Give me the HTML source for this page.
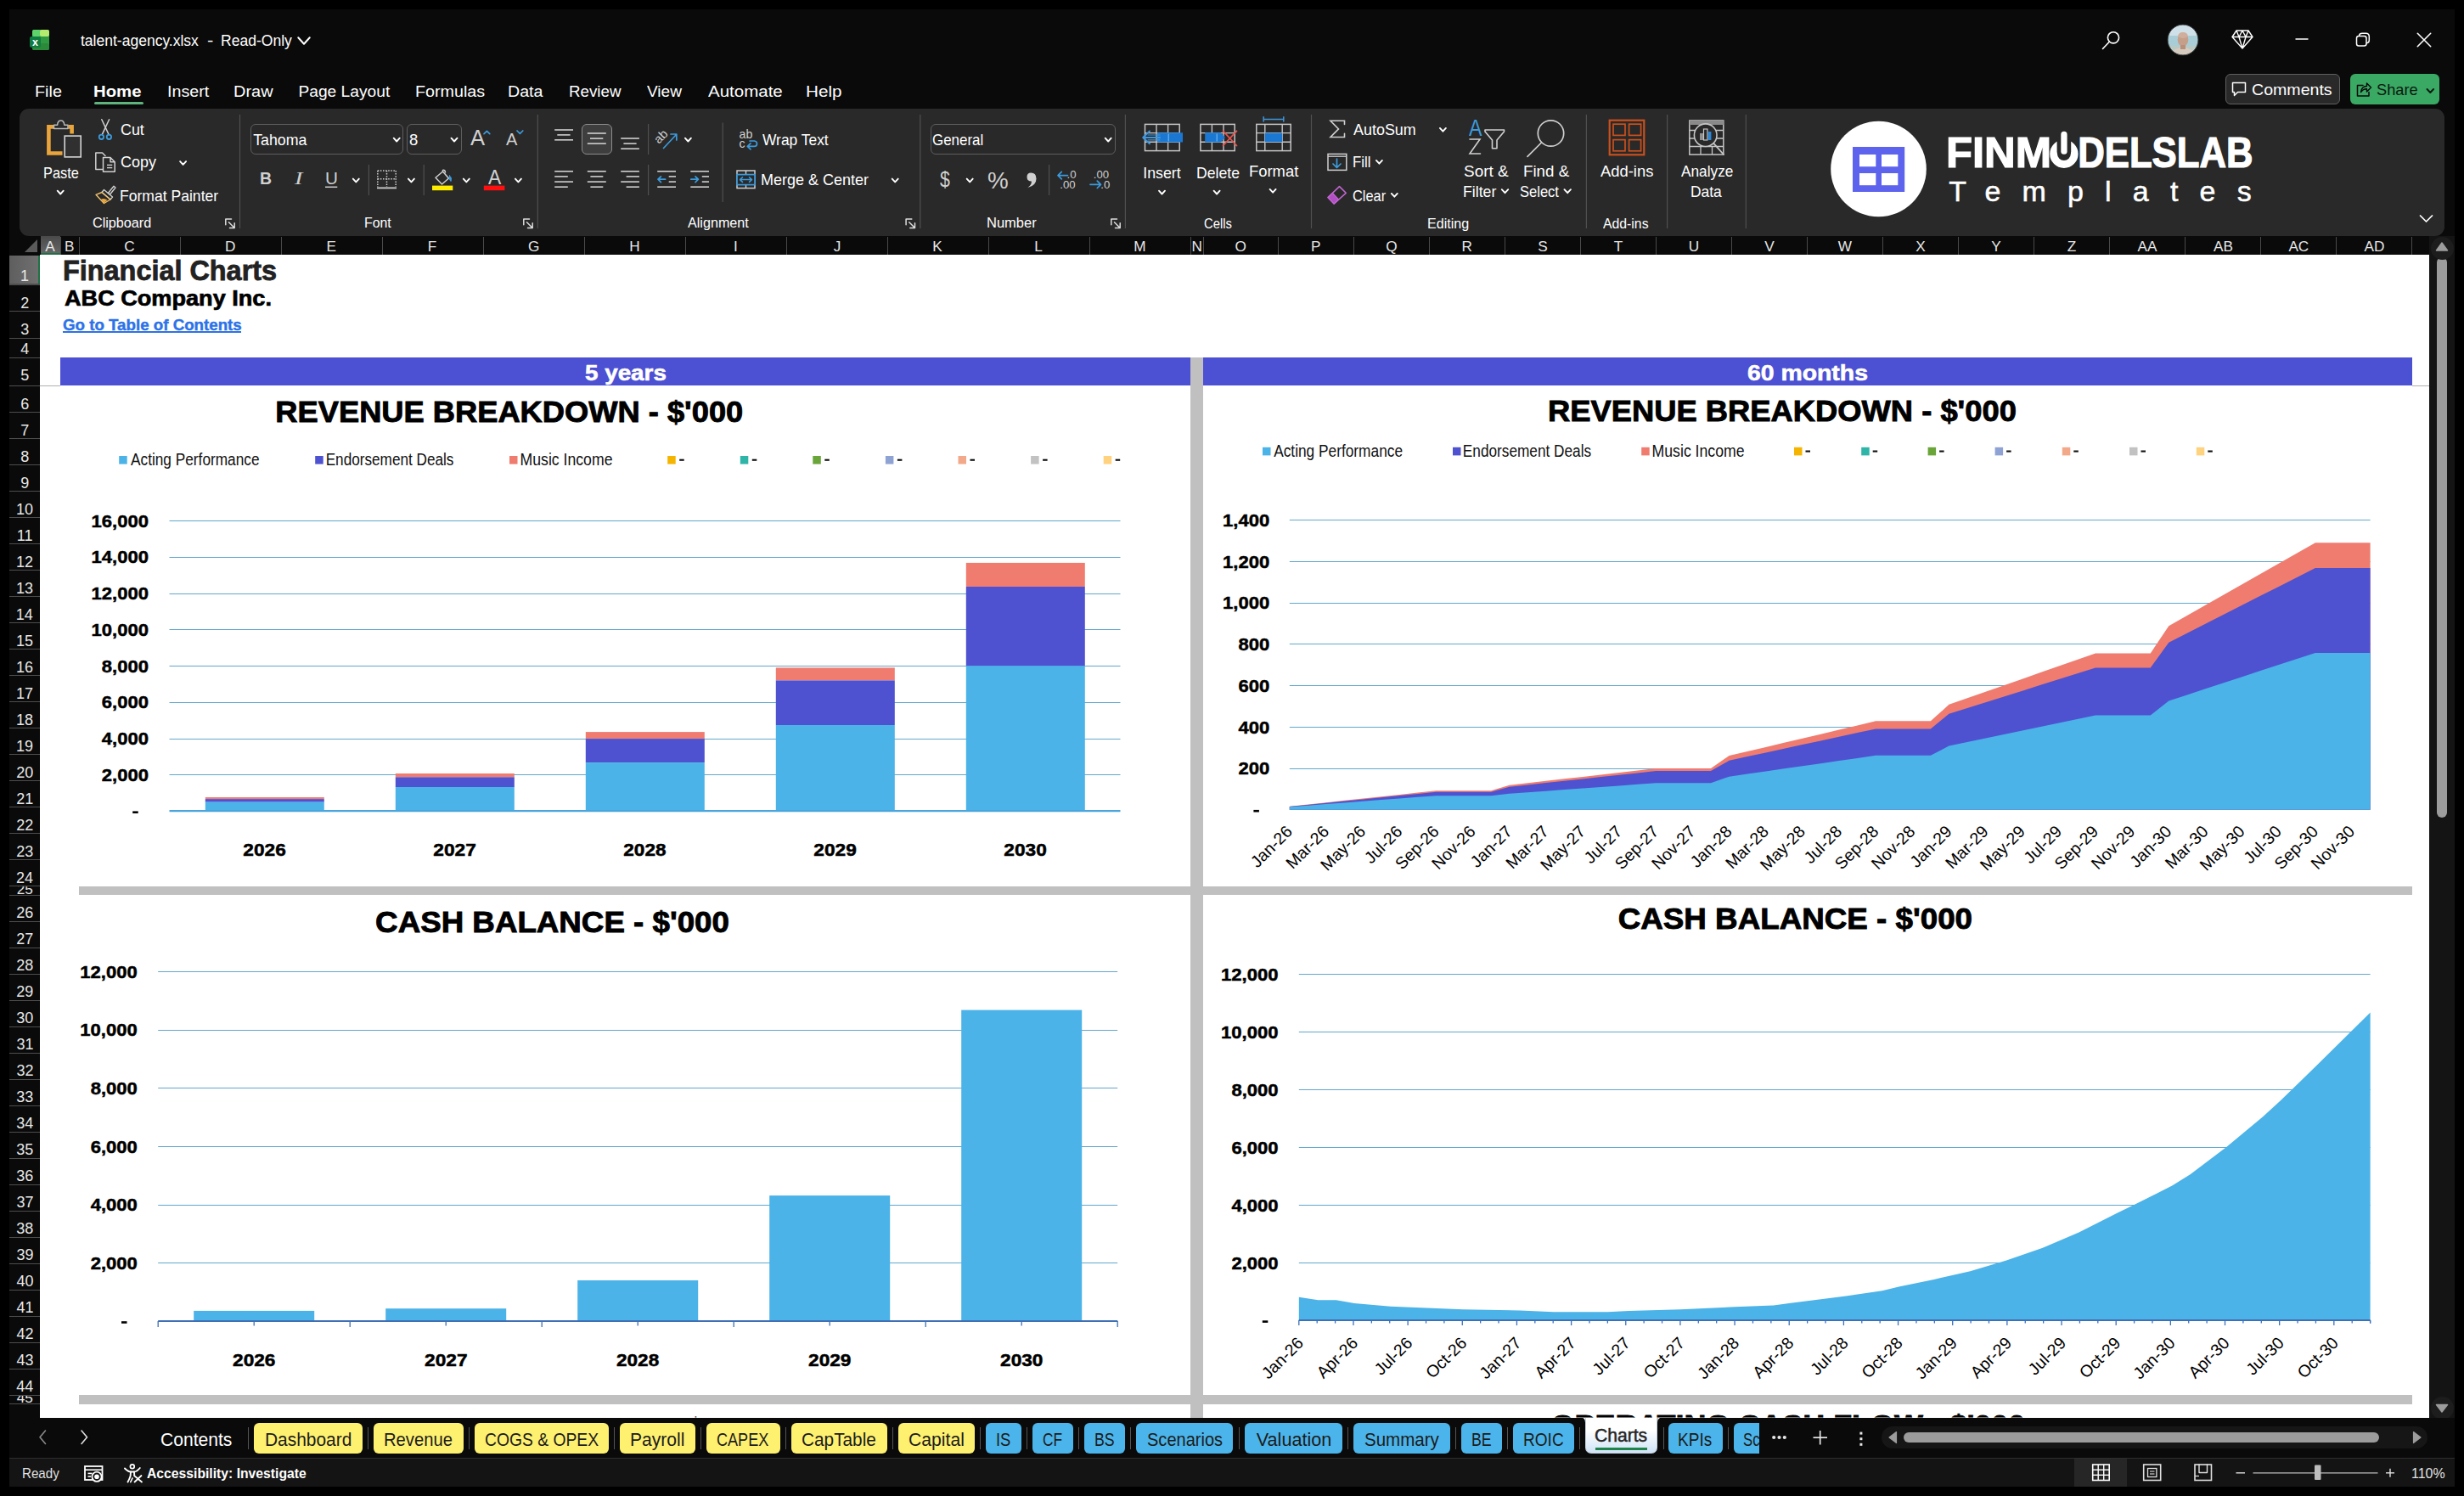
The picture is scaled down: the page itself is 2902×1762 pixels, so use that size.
<!DOCTYPE html>
<html><head><meta charset="utf-8"><title>talent-agency.xlsx - Excel</title>
<style>
html,body{margin:0;padding:0;background:#000;}
body{width:2902px;height:1762px;position:relative;overflow:hidden;font-family:"Liberation Sans",sans-serif;}
.t{position:absolute;white-space:nowrap;transform-origin:0 0;display:block;}
.b{position:absolute;box-sizing:border-box;}
svg.ov{position:absolute;left:0;top:0;}
svg text{font-family:"Liberation Sans",sans-serif;}
</style></head>
<body>
<div class="b " style="left:11.00px;top:11.00px;width:2880.00px;height:1740.00px;background:#0a0a0a;"></div>
<div class="b " style="left:23.00px;top:127.50px;width:2856.00px;height:150.00px;background:#292929;border-radius:11px;"></div>
<span class="t" style="left:95.24px;top:37px;font-size:18.90px;line-height:21px;color:#fff;transform:scaleX(0.9270);">talent-agency.xlsx</span>
<span class="t" style="left:244.12px;top:37px;font-size:18.90px;line-height:21px;color:#fff;transform:scaleX(1.1640);">-</span>
<span class="t" style="left:260.10px;top:37px;font-size:18.90px;line-height:21px;color:#fff;transform:scaleX(0.9287);">Read-Only</span>
<span class="t" style="left:40.92px;top:97px;font-size:19.20px;line-height:21px;color:#fff;transform:scaleX(1.0312);">File</span>
<span class="t" style="left:110.18px;top:97px;font-size:19.20px;line-height:21px;color:#fff;font-weight:bold;transform:scaleX(1.0592);">Home</span>
<span class="t" style="left:196.73px;top:97px;font-size:19.20px;line-height:21px;color:#fff;transform:scaleX(1.0265);">Insert</span>
<span class="t" style="left:275.40px;top:97px;font-size:19.20px;line-height:21px;color:#fff;transform:scaleX(1.0394);">Draw</span>
<span class="t" style="left:351.47px;top:97px;font-size:19.20px;line-height:21px;color:#fff;">Page Layout</span>
<span class="t" style="left:489.42px;top:97px;font-size:19.20px;line-height:21px;color:#fff;transform:scaleX(1.0275);">Formulas</span>
<span class="t" style="left:598.43px;top:97px;font-size:19.20px;line-height:21px;color:#fff;transform:scaleX(1.0238);">Data</span>
<span class="t" style="left:669.50px;top:97px;font-size:19.20px;line-height:21px;color:#fff;transform:scaleX(0.9766);">Review</span>
<span class="t" style="left:762.00px;top:97px;font-size:19.20px;line-height:21px;color:#fff;transform:scaleX(0.9932);">View</span>
<span class="t" style="left:834.00px;top:97px;font-size:19.20px;line-height:21px;color:#fff;transform:scaleX(1.0687);">Automate</span>
<span class="t" style="left:949.35px;top:97px;font-size:19.20px;line-height:21px;color:#fff;transform:scaleX(1.0767);">Help</span>
<div class="b " style="left:111.00px;top:120.00px;width:58.00px;height:3.00px;background:#5fb37c;border-radius:1.5px;"></div>
<div class="b " style="left:2621.00px;top:87.00px;width:135.00px;height:36.00px;background:#292929;border:1px solid #606060;border-radius:6px;"></div>
<span class="t" style="left:2652.02px;top:95px;font-size:19.00px;line-height:21px;color:#fff;transform:scaleX(1.0305);">Comments</span>
<div class="b " style="left:2768.00px;top:87.00px;width:105.00px;height:36.00px;background:#3aa963;border-radius:6px;"></div>
<span class="t" style="left:2799.18px;top:95px;font-size:19.00px;line-height:21px;color:#0a1a10;transform:scaleX(0.9588);">Share</span>
<div class="b " style="left:47.00px;top:277.50px;width:2813.00px;height:22.50px;background:#0a0a0a;"></div>
<div class="b " style="left:47.50px;top:277.50px;width:23.00px;height:22.50px;background:#555;background:linear-gradient(#4a4a4a,#666);border-bottom:2px solid #1e7145;"></div>
<div class="b " style="left:70.50px;top:279.00px;width:1.00px;height:21.00px;background:#4a4a4a;"></div>
<span class="t" style="left:53.28px;top:280px;font-size:17.20px;line-height:20px;color:#e6e6e6;">A</span>
<div class="b " style="left:92.50px;top:279.00px;width:1.00px;height:21.00px;background:#4a4a4a;"></div>
<span class="t" style="left:76.02px;top:280px;font-size:17.20px;line-height:20px;color:#e6e6e6;">B</span>
<div class="b " style="left:211.50px;top:279.00px;width:1.00px;height:21.00px;background:#4a4a4a;"></div>
<span class="t" style="left:146.18px;top:280px;font-size:17.20px;line-height:20px;color:#e6e6e6;">C</span>
<div class="b " style="left:330.50px;top:279.00px;width:1.00px;height:21.00px;background:#4a4a4a;"></div>
<span class="t" style="left:265.01px;top:280px;font-size:17.20px;line-height:20px;color:#e6e6e6;">D</span>
<div class="b " style="left:449.50px;top:279.00px;width:1.00px;height:21.00px;background:#4a4a4a;"></div>
<span class="t" style="left:384.44px;top:280px;font-size:17.20px;line-height:20px;color:#e6e6e6;">E</span>
<div class="b " style="left:568.50px;top:279.00px;width:1.00px;height:21.00px;background:#4a4a4a;"></div>
<span class="t" style="left:503.87px;top:280px;font-size:17.20px;line-height:20px;color:#e6e6e6;">F</span>
<div class="b " style="left:687.50px;top:279.00px;width:1.00px;height:21.00px;background:#4a4a4a;"></div>
<span class="t" style="left:622.01px;top:280px;font-size:17.20px;line-height:20px;color:#e6e6e6;">G</span>
<div class="b " style="left:806.50px;top:279.00px;width:1.00px;height:21.00px;background:#4a4a4a;"></div>
<span class="t" style="left:741.26px;top:280px;font-size:17.20px;line-height:20px;color:#e6e6e6;">H</span>
<div class="b " style="left:925.50px;top:279.00px;width:1.00px;height:21.00px;background:#4a4a4a;"></div>
<span class="t" style="left:864.09px;top:280px;font-size:17.20px;line-height:20px;color:#e6e6e6;">I</span>
<div class="b " style="left:1044.50px;top:279.00px;width:1.00px;height:21.00px;background:#4a4a4a;"></div>
<span class="t" style="left:981.67px;top:280px;font-size:17.20px;line-height:20px;color:#e6e6e6;">J</span>
<div class="b " style="left:1163.50px;top:279.00px;width:1.00px;height:21.00px;background:#4a4a4a;"></div>
<span class="t" style="left:1098.14px;top:280px;font-size:17.20px;line-height:20px;color:#e6e6e6;">K</span>
<div class="b " style="left:1282.50px;top:279.00px;width:1.00px;height:21.00px;background:#4a4a4a;"></div>
<span class="t" style="left:1218.30px;top:280px;font-size:17.20px;line-height:20px;color:#e6e6e6;">L</span>
<div class="b " style="left:1401.50px;top:279.00px;width:1.00px;height:21.00px;background:#4a4a4a;"></div>
<span class="t" style="left:1335.32px;top:280px;font-size:17.20px;line-height:20px;color:#e6e6e6;">M</span>
<div class="b " style="left:1416.50px;top:279.00px;width:1.00px;height:21.00px;background:#4a4a4a;"></div>
<span class="t" style="left:1403.42px;top:280px;font-size:17.20px;line-height:20px;color:#e6e6e6;">N</span>
<div class="b " style="left:1505.00px;top:279.00px;width:1.00px;height:21.00px;background:#4a4a4a;"></div>
<span class="t" style="left:1454.59px;top:280px;font-size:17.20px;line-height:20px;color:#e6e6e6;">O</span>
<div class="b " style="left:1594.00px;top:279.00px;width:1.00px;height:21.00px;background:#4a4a4a;"></div>
<span class="t" style="left:1544.02px;top:280px;font-size:17.20px;line-height:20px;color:#e6e6e6;">P</span>
<div class="b " style="left:1683.00px;top:279.00px;width:1.00px;height:21.00px;background:#4a4a4a;"></div>
<span class="t" style="left:1632.34px;top:280px;font-size:17.20px;line-height:20px;color:#e6e6e6;">Q</span>
<div class="b " style="left:1772.00px;top:279.00px;width:1.00px;height:21.00px;background:#4a4a4a;"></div>
<span class="t" style="left:1721.46px;top:280px;font-size:17.20px;line-height:20px;color:#e6e6e6;">R</span>
<div class="b " style="left:1861.00px;top:279.00px;width:1.00px;height:21.00px;background:#4a4a4a;"></div>
<span class="t" style="left:1811.24px;top:280px;font-size:17.20px;line-height:20px;color:#e6e6e6;">S</span>
<div class="b " style="left:1950.00px;top:279.00px;width:1.00px;height:21.00px;background:#4a4a4a;"></div>
<span class="t" style="left:1900.75px;top:280px;font-size:17.20px;line-height:20px;color:#e6e6e6;">T</span>
<div class="b " style="left:2039.00px;top:279.00px;width:1.00px;height:21.00px;background:#4a4a4a;"></div>
<span class="t" style="left:1988.81px;top:280px;font-size:17.20px;line-height:20px;color:#e6e6e6;">U</span>
<div class="b " style="left:2128.00px;top:279.00px;width:1.00px;height:21.00px;background:#4a4a4a;"></div>
<span class="t" style="left:2078.28px;top:280px;font-size:17.20px;line-height:20px;color:#e6e6e6;">V</span>
<div class="b " style="left:2217.00px;top:279.00px;width:1.00px;height:21.00px;background:#4a4a4a;"></div>
<span class="t" style="left:2164.87px;top:280px;font-size:17.20px;line-height:20px;color:#e6e6e6;">W</span>
<div class="b " style="left:2306.00px;top:279.00px;width:1.00px;height:21.00px;background:#4a4a4a;"></div>
<span class="t" style="left:2256.24px;top:280px;font-size:17.20px;line-height:20px;color:#e6e6e6;">X</span>
<div class="b " style="left:2395.00px;top:279.00px;width:1.00px;height:21.00px;background:#4a4a4a;"></div>
<span class="t" style="left:2345.28px;top:280px;font-size:17.20px;line-height:20px;color:#e6e6e6;">Y</span>
<div class="b " style="left:2484.00px;top:279.00px;width:1.00px;height:21.00px;background:#4a4a4a;"></div>
<span class="t" style="left:2434.75px;top:280px;font-size:17.20px;line-height:20px;color:#e6e6e6;">Z</span>
<div class="b " style="left:2573.00px;top:279.00px;width:1.00px;height:21.00px;background:#4a4a4a;"></div>
<span class="t" style="left:2517.56px;top:280px;font-size:17.20px;line-height:20px;color:#e6e6e6;">AA</span>
<div class="b " style="left:2662.00px;top:279.00px;width:1.00px;height:21.00px;background:#4a4a4a;"></div>
<span class="t" style="left:2606.99px;top:280px;font-size:17.20px;line-height:20px;color:#e6e6e6;">AB</span>
<div class="b " style="left:2751.00px;top:279.00px;width:1.00px;height:21.00px;background:#4a4a4a;"></div>
<span class="t" style="left:2695.39px;top:280px;font-size:17.20px;line-height:20px;color:#e6e6e6;">AC</span>
<div class="b " style="left:2840.00px;top:279.00px;width:1.00px;height:21.00px;background:#4a4a4a;"></div>
<span class="t" style="left:2784.48px;top:280px;font-size:17.20px;line-height:20px;color:#e6e6e6;">AD</span>
<div class="b " style="left:47.00px;top:300.00px;width:2813.50px;height:1369.60px;background:#fff;"></div>
<div class="b " style="left:11.00px;top:300.00px;width:36.00px;height:1369.60px;background:#0a0a0a;overflow:hidden;"></div>
<div class="b " style="left:11.00px;top:300.50px;width:36.00px;height:34.00px;background:#666;border-right:2px solid #1e7145;background:linear-gradient(90deg,#5e5e5e,#707070);"></div>
<div class="b " style="left:11.00px;top:334.20px;width:36.00px;height:1.40px;background:#4d4d4d;"></div>
<div class="b " style="left:11.00px;top:366.10px;width:36.00px;height:1.40px;background:#4d4d4d;"></div>
<div class="b " style="left:11.00px;top:397.70px;width:36.00px;height:1.40px;background:#4d4d4d;"></div>
<div class="b " style="left:11.00px;top:420.70px;width:36.00px;height:1.40px;background:#4d4d4d;"></div>
<div class="b " style="left:11.00px;top:453.90px;width:36.00px;height:1.40px;background:#4d4d4d;"></div>
<div class="b " style="left:11.00px;top:484.90px;width:36.00px;height:1.40px;background:#4d4d4d;"></div>
<div class="b " style="left:11.00px;top:515.90px;width:36.00px;height:1.40px;background:#4d4d4d;"></div>
<div class="b " style="left:11.00px;top:546.90px;width:36.00px;height:1.40px;background:#4d4d4d;"></div>
<div class="b " style="left:11.00px;top:577.90px;width:36.00px;height:1.40px;background:#4d4d4d;"></div>
<div class="b " style="left:11.00px;top:608.90px;width:36.00px;height:1.40px;background:#4d4d4d;"></div>
<div class="b " style="left:11.00px;top:639.90px;width:36.00px;height:1.40px;background:#4d4d4d;"></div>
<div class="b " style="left:11.00px;top:670.90px;width:36.00px;height:1.40px;background:#4d4d4d;"></div>
<div class="b " style="left:11.00px;top:701.90px;width:36.00px;height:1.40px;background:#4d4d4d;"></div>
<div class="b " style="left:11.00px;top:732.90px;width:36.00px;height:1.40px;background:#4d4d4d;"></div>
<div class="b " style="left:11.00px;top:763.90px;width:36.00px;height:1.40px;background:#4d4d4d;"></div>
<div class="b " style="left:11.00px;top:794.90px;width:36.00px;height:1.40px;background:#4d4d4d;"></div>
<div class="b " style="left:11.00px;top:825.90px;width:36.00px;height:1.40px;background:#4d4d4d;"></div>
<div class="b " style="left:11.00px;top:856.90px;width:36.00px;height:1.40px;background:#4d4d4d;"></div>
<div class="b " style="left:11.00px;top:887.90px;width:36.00px;height:1.40px;background:#4d4d4d;"></div>
<div class="b " style="left:11.00px;top:918.90px;width:36.00px;height:1.40px;background:#4d4d4d;"></div>
<div class="b " style="left:11.00px;top:949.90px;width:36.00px;height:1.40px;background:#4d4d4d;"></div>
<div class="b " style="left:11.00px;top:980.90px;width:36.00px;height:1.40px;background:#4d4d4d;"></div>
<div class="b " style="left:11.00px;top:1011.90px;width:36.00px;height:1.40px;background:#4d4d4d;"></div>
<div class="b " style="left:11.00px;top:1042.90px;width:36.00px;height:1.40px;background:#4d4d4d;"></div>
<div class="b " style="left:11.00px;top:1053.50px;width:36.00px;height:1.40px;background:#4d4d4d;"></div>
<div class="b " style="left:11.00px;top:1084.50px;width:36.00px;height:1.40px;background:#4d4d4d;"></div>
<div class="b " style="left:11.00px;top:1115.50px;width:36.00px;height:1.40px;background:#4d4d4d;"></div>
<div class="b " style="left:11.00px;top:1146.50px;width:36.00px;height:1.40px;background:#4d4d4d;"></div>
<div class="b " style="left:11.00px;top:1177.50px;width:36.00px;height:1.40px;background:#4d4d4d;"></div>
<div class="b " style="left:11.00px;top:1208.50px;width:36.00px;height:1.40px;background:#4d4d4d;"></div>
<div class="b " style="left:11.00px;top:1239.50px;width:36.00px;height:1.40px;background:#4d4d4d;"></div>
<div class="b " style="left:11.00px;top:1270.50px;width:36.00px;height:1.40px;background:#4d4d4d;"></div>
<div class="b " style="left:11.00px;top:1301.50px;width:36.00px;height:1.40px;background:#4d4d4d;"></div>
<div class="b " style="left:11.00px;top:1332.50px;width:36.00px;height:1.40px;background:#4d4d4d;"></div>
<div class="b " style="left:11.00px;top:1363.50px;width:36.00px;height:1.40px;background:#4d4d4d;"></div>
<div class="b " style="left:11.00px;top:1394.50px;width:36.00px;height:1.40px;background:#4d4d4d;"></div>
<div class="b " style="left:11.00px;top:1425.50px;width:36.00px;height:1.40px;background:#4d4d4d;"></div>
<div class="b " style="left:11.00px;top:1456.50px;width:36.00px;height:1.40px;background:#4d4d4d;"></div>
<div class="b " style="left:11.00px;top:1487.50px;width:36.00px;height:1.40px;background:#4d4d4d;"></div>
<div class="b " style="left:11.00px;top:1518.50px;width:36.00px;height:1.40px;background:#4d4d4d;"></div>
<div class="b " style="left:11.00px;top:1549.50px;width:36.00px;height:1.40px;background:#4d4d4d;"></div>
<div class="b " style="left:11.00px;top:1580.50px;width:36.00px;height:1.40px;background:#4d4d4d;"></div>
<div class="b " style="left:11.00px;top:1611.50px;width:36.00px;height:1.40px;background:#4d4d4d;"></div>
<div class="b " style="left:11.00px;top:1642.50px;width:36.00px;height:1.40px;background:#4d4d4d;"></div>
<div class="b " style="left:11.00px;top:1653.10px;width:36.00px;height:1.40px;background:#4d4d4d;"></div>
<span class="t" style="left:24.04px;top:315px;font-size:18.00px;line-height:20px;color:#e6e6e6;">1</span>
<span class="t" style="left:24.26px;top:347px;font-size:18.00px;line-height:20px;color:#e6e6e6;">2</span>
<span class="t" style="left:24.35px;top:378px;font-size:18.00px;line-height:20px;color:#e6e6e6;">3</span>
<span class="t" style="left:24.35px;top:401px;font-size:18.00px;line-height:20px;color:#e6e6e6;">4</span>
<span class="t" style="left:24.31px;top:432px;font-size:18.00px;line-height:20px;color:#e6e6e6;">5</span>
<span class="t" style="left:24.22px;top:466px;font-size:18.00px;line-height:20px;color:#e6e6e6;">6</span>
<span class="t" style="left:24.26px;top:497px;font-size:18.00px;line-height:20px;color:#e6e6e6;">7</span>
<span class="t" style="left:24.31px;top:528px;font-size:18.00px;line-height:20px;color:#e6e6e6;">8</span>
<span class="t" style="left:24.31px;top:559px;font-size:18.00px;line-height:20px;color:#e6e6e6;">9</span>
<span class="t" style="left:18.95px;top:590px;font-size:18.00px;line-height:20px;color:#e6e6e6;">10</span>
<span class="t" style="left:19.71px;top:621px;font-size:18.00px;line-height:20px;color:#e6e6e6;">11</span>
<span class="t" style="left:19.04px;top:652px;font-size:18.00px;line-height:20px;color:#e6e6e6;">12</span>
<span class="t" style="left:18.99px;top:683px;font-size:18.00px;line-height:20px;color:#e6e6e6;">13</span>
<span class="t" style="left:18.86px;top:714px;font-size:18.00px;line-height:20px;color:#e6e6e6;">14</span>
<span class="t" style="left:18.99px;top:745px;font-size:18.00px;line-height:20px;color:#e6e6e6;">15</span>
<span class="t" style="left:18.99px;top:776px;font-size:18.00px;line-height:20px;color:#e6e6e6;">16</span>
<span class="t" style="left:19.04px;top:807px;font-size:18.00px;line-height:20px;color:#e6e6e6;">17</span>
<span class="t" style="left:18.99px;top:838px;font-size:18.00px;line-height:20px;color:#e6e6e6;">18</span>
<span class="t" style="left:19.04px;top:869px;font-size:18.00px;line-height:20px;color:#e6e6e6;">19</span>
<span class="t" style="left:19.18px;top:900px;font-size:18.00px;line-height:20px;color:#e6e6e6;">20</span>
<span class="t" style="left:19.27px;top:931px;font-size:18.00px;line-height:20px;color:#e6e6e6;">21</span>
<span class="t" style="left:19.27px;top:962px;font-size:18.00px;line-height:20px;color:#e6e6e6;">22</span>
<span class="t" style="left:19.22px;top:993px;font-size:18.00px;line-height:20px;color:#e6e6e6;">23</span>
<span class="t" style="left:19.09px;top:1024px;font-size:18.00px;line-height:20px;color:#e6e6e6;">24</span>
<span class="t" style="left:19.22px;top:1065px;font-size:18.00px;line-height:20px;color:#e6e6e6;">26</span>
<span class="t" style="left:19.27px;top:1096px;font-size:18.00px;line-height:20px;color:#e6e6e6;">27</span>
<span class="t" style="left:19.22px;top:1127px;font-size:18.00px;line-height:20px;color:#e6e6e6;">28</span>
<span class="t" style="left:19.27px;top:1158px;font-size:18.00px;line-height:20px;color:#e6e6e6;">29</span>
<span class="t" style="left:19.31px;top:1189px;font-size:18.00px;line-height:20px;color:#e6e6e6;">30</span>
<span class="t" style="left:19.40px;top:1220px;font-size:18.00px;line-height:20px;color:#e6e6e6;">31</span>
<span class="t" style="left:19.40px;top:1251px;font-size:18.00px;line-height:20px;color:#e6e6e6;">32</span>
<span class="t" style="left:19.36px;top:1282px;font-size:18.00px;line-height:20px;color:#e6e6e6;">33</span>
<span class="t" style="left:19.22px;top:1313px;font-size:18.00px;line-height:20px;color:#e6e6e6;">34</span>
<span class="t" style="left:19.36px;top:1344px;font-size:18.00px;line-height:20px;color:#e6e6e6;">35</span>
<span class="t" style="left:19.36px;top:1375px;font-size:18.00px;line-height:20px;color:#e6e6e6;">36</span>
<span class="t" style="left:19.40px;top:1406px;font-size:18.00px;line-height:20px;color:#e6e6e6;">37</span>
<span class="t" style="left:19.36px;top:1437px;font-size:18.00px;line-height:20px;color:#e6e6e6;">38</span>
<span class="t" style="left:19.40px;top:1468px;font-size:18.00px;line-height:20px;color:#e6e6e6;">39</span>
<span class="t" style="left:19.45px;top:1499px;font-size:18.00px;line-height:20px;color:#e6e6e6;">40</span>
<span class="t" style="left:19.54px;top:1530px;font-size:18.00px;line-height:20px;color:#e6e6e6;">41</span>
<span class="t" style="left:19.54px;top:1561px;font-size:18.00px;line-height:20px;color:#e6e6e6;">42</span>
<span class="t" style="left:19.49px;top:1592px;font-size:18.00px;line-height:20px;color:#e6e6e6;">43</span>
<span class="t" style="left:19.36px;top:1623px;font-size:18.00px;line-height:20px;color:#e6e6e6;">44</span>
<span class="t" style="left:74.39px;top:300px;font-size:32.60px;line-height:37px;color:#222;font-weight:bold;transform:scaleX(0.9945);-webkit-text-stroke:0.8px #222;">Financial Charts</span>
<span class="t" style="left:75.82px;top:337px;font-size:25.60px;line-height:28px;color:#000;font-weight:bold;transform:scaleX(1.0588);-webkit-text-stroke:0.7px #000;">ABC Company Inc.</span>
<span class="t" style="left:74.05px;top:373px;font-size:17.80px;line-height:20px;color:#2d72e8;font-weight:bold;transform:scaleX(1.0527);-webkit-text-stroke:0.4px #2d72e8;">Go to Table of Contents</span>
<div class="b " style="left:74.40px;top:390.10px;width:210.00px;height:1.80px;background:#2d72e8;"></div>
<div class="b " style="left:70.50px;top:421.20px;width:1331.80px;height:33.20px;background:#4c50d2;"></div>
<div class="b " style="left:1416.50px;top:421.20px;width:1424.50px;height:33.20px;background:#4c50d2;"></div>
<div class="b " style="left:47.00px;top:454.00px;width:23.50px;height:1.00px;background:#b0b0b0;"></div>
<div class="b " style="left:2841.00px;top:454.00px;width:19.50px;height:1.00px;background:#b0b0b0;"></div>
<span class="t" style="left:689.17px;top:424px;font-size:26.20px;line-height:30px;color:#fff;font-weight:bold;transform:scaleX(1.0615);-webkit-text-stroke:0.6px #fff;">5 years</span>
<span class="t" style="left:2057.51px;top:424px;font-size:26.20px;line-height:30px;color:#fff;font-weight:bold;transform:scaleX(1.0839);-webkit-text-stroke:0.6px #fff;">60 months</span>
<div class="b " style="left:1402.20px;top:421.20px;width:14.60px;height:1248.40px;background:#c0c0c0;"></div>
<div class="b " style="left:93.00px;top:1043.60px;width:2748.00px;height:10.80px;background:#c0c0c0;"></div>
<div class="b " style="left:93.00px;top:1643.40px;width:2748.00px;height:11.00px;background:#c0c0c0;"></div>
<div class="b " style="left:2860.50px;top:277.50px;width:30.50px;height:1392.00px;background:#141414;"></div>
<div class="b " style="left:2869.70px;top:303.00px;width:12.20px;height:660.00px;background:#9c9c9c;border-radius:6px;"></div>
<div class="b " style="left:2862.50px;top:279.00px;width:27.00px;height:27.00px;background:#1d1d1d;border-radius:13.5px;"></div>
<div class="b " style="left:2862.50px;top:1645.00px;width:27.00px;height:27.00px;background:#1d1d1d;border-radius:13.5px;"></div>
<div class="b " style="left:11.00px;top:1669.60px;width:2880.00px;height:48.00px;background:#0a0a0a;"></div>
<div class="b " style="left:11.00px;top:1717.40px;width:2880.00px;height:1.00px;background:#2e2e2e;"></div>
<div class="b " style="left:11.00px;top:1718.00px;width:2880.00px;height:33.00px;background:#141414;"></div>
<span class="t" style="left:188.95px;top:1683px;font-size:21.60px;line-height:25px;color:#fff;transform:scaleX(0.9767);">Contents</span>
<div class="b " style="left:292.00px;top:1681.00px;width:1.00px;height:26.00px;background:#555;"></div>
<div class="b " style="left:299.00px;top:1676.00px;width:128.00px;height:35.70px;background:#fff170;border-radius:6px;"></div>
<span class="t" style="left:311.63px;top:1683px;font-size:21.60px;line-height:25px;color:#1c1c1c;transform:scaleX(0.9688);">Dashboard</span>
<div class="b " style="left:433.20px;top:1681.00px;width:1.00px;height:26.00px;background:#555;"></div>
<div class="b " style="left:440.30px;top:1676.00px;width:105.70px;height:35.70px;background:#fff170;border-radius:6px;"></div>
<span class="t" style="left:452.33px;top:1683px;font-size:21.60px;line-height:25px;color:#1c1c1c;transform:scaleX(0.9355);">Revenue</span>
<div class="b " style="left:552.20px;top:1681.00px;width:1.00px;height:26.00px;background:#555;"></div>
<div class="b " style="left:559.30px;top:1676.00px;width:157.40px;height:35.70px;background:#fff170;border-radius:6px;"></div>
<span class="t" style="left:570.63px;top:1683px;font-size:21.60px;line-height:25px;color:#1c1c1c;transform:scaleX(0.8936);">COGS &amp; OPEX</span>
<div class="b " style="left:722.90px;top:1681.00px;width:1.00px;height:26.00px;background:#555;"></div>
<div class="b " style="left:730.00px;top:1676.00px;width:89.00px;height:35.70px;background:#fff170;border-radius:6px;"></div>
<span class="t" style="left:742.06px;top:1683px;font-size:21.60px;line-height:25px;color:#1c1c1c;transform:scaleX(0.9767);">Payroll</span>
<div class="b " style="left:825.20px;top:1681.00px;width:1.00px;height:26.00px;background:#555;"></div>
<div class="b " style="left:832.00px;top:1676.00px;width:86.70px;height:35.70px;background:#fff170;border-radius:6px;"></div>
<span class="t" style="left:844.40px;top:1683px;font-size:21.60px;line-height:25px;color:#1c1c1c;transform:scaleX(0.8368);">CAPEX</span>
<div class="b " style="left:924.90px;top:1681.00px;width:1.00px;height:26.00px;background:#555;"></div>
<div class="b " style="left:932.00px;top:1676.00px;width:112.80px;height:35.70px;background:#fff170;border-radius:6px;"></div>
<span class="t" style="left:944.36px;top:1683px;font-size:21.60px;line-height:25px;color:#1c1c1c;transform:scaleX(0.9629);">CapTable</span>
<div class="b " style="left:1051.00px;top:1681.00px;width:1.00px;height:26.00px;background:#555;"></div>
<div class="b " style="left:1058.00px;top:1676.00px;width:90.00px;height:35.70px;background:#fff170;border-radius:6px;"></div>
<span class="t" style="left:1070.19px;top:1683px;font-size:21.60px;line-height:25px;color:#1c1c1c;transform:scaleX(0.9799);">Capital</span>
<div class="b " style="left:1154.20px;top:1681.00px;width:1.00px;height:26.00px;background:#555;"></div>
<div class="b " style="left:1161.00px;top:1676.00px;width:41.60px;height:35.70px;background:#4bb4ea;border-radius:6px;"></div>
<span class="t" style="left:1172.64px;top:1683px;font-size:21.60px;line-height:25px;color:#1c1c1c;transform:scaleX(0.8521);">IS</span>
<div class="b " style="left:1208.80px;top:1681.00px;width:1.00px;height:26.00px;background:#555;"></div>
<div class="b " style="left:1216.20px;top:1676.00px;width:47.40px;height:35.70px;background:#4bb4ea;border-radius:6px;"></div>
<span class="t" style="left:1228.29px;top:1683px;font-size:21.60px;line-height:25px;color:#1c1c1c;transform:scaleX(0.7995);">CF</span>
<div class="b " style="left:1269.80px;top:1681.00px;width:1.00px;height:26.00px;background:#555;"></div>
<div class="b " style="left:1277.20px;top:1676.00px;width:47.50px;height:35.70px;background:#4bb4ea;border-radius:6px;"></div>
<span class="t" style="left:1288.78px;top:1683px;font-size:21.60px;line-height:25px;color:#1c1c1c;transform:scaleX(0.8226);">BS</span>
<div class="b " style="left:1330.90px;top:1681.00px;width:1.00px;height:26.00px;background:#555;"></div>
<div class="b " style="left:1338.10px;top:1676.00px;width:114.40px;height:35.70px;background:#4bb4ea;border-radius:6px;"></div>
<span class="t" style="left:1350.65px;top:1683px;font-size:21.60px;line-height:25px;color:#1c1c1c;transform:scaleX(0.9280);">Scenarios</span>
<div class="b " style="left:1458.70px;top:1681.00px;width:1.00px;height:26.00px;background:#555;"></div>
<div class="b " style="left:1465.90px;top:1676.00px;width:115.30px;height:35.70px;background:#4bb4ea;border-radius:6px;"></div>
<span class="t" style="left:1479.80px;top:1683px;font-size:21.60px;line-height:25px;color:#1c1c1c;">Valuation</span>
<div class="b " style="left:1587.40px;top:1681.00px;width:1.00px;height:26.00px;background:#555;"></div>
<div class="b " style="left:1593.80px;top:1676.00px;width:114.40px;height:35.70px;background:#4bb4ea;border-radius:6px;"></div>
<span class="t" style="left:1606.58px;top:1683px;font-size:21.60px;line-height:25px;color:#1c1c1c;transform:scaleX(0.9511);">Summary</span>
<div class="b " style="left:1714.40px;top:1681.00px;width:1.00px;height:26.00px;background:#555;"></div>
<div class="b " style="left:1721.20px;top:1676.00px;width:47.80px;height:35.70px;background:#4bb4ea;border-radius:6px;"></div>
<span class="t" style="left:1732.93px;top:1683px;font-size:21.60px;line-height:25px;color:#1c1c1c;transform:scaleX(0.8226);">BE</span>
<div class="b " style="left:1775.20px;top:1681.00px;width:1.00px;height:26.00px;background:#555;"></div>
<div class="b " style="left:1782.00px;top:1676.00px;width:72.20px;height:35.70px;background:#4bb4ea;border-radius:6px;"></div>
<span class="t" style="left:1793.82px;top:1683px;font-size:21.60px;line-height:25px;color:#1c1c1c;transform:scaleX(0.8832);">ROIC</span>
<div class="b " style="left:1860.40px;top:1681.00px;width:1.00px;height:26.00px;background:#555;"></div>
<div class="b " style="left:1867.00px;top:1670.00px;width:85.30px;height:42.00px;background:#fff;border-radius:0 0 7px 7px;background:linear-gradient(#ffffff 35%,#cfe3f7);border:1px solid #c8d4e0;border-top:none;"></div>
<span class="t" style="left:1877.95px;top:1678px;font-size:21.60px;line-height:25px;color:#262626;transform:scaleX(0.9761);-webkit-text-stroke:0.5px #262626;">Charts</span>
<div class="b " style="left:1879.00px;top:1705.00px;width:61.00px;height:3.00px;background:#1e8449;"></div>
<div class="b " style="left:1958.60px;top:1681.00px;width:1.00px;height:26.00px;background:#555;"></div>
<div class="b " style="left:1965.00px;top:1676.00px;width:63.80px;height:35.70px;background:#4bb4ea;border-radius:6px;"></div>
<span class="t" style="left:1976.38px;top:1683px;font-size:21.60px;line-height:25px;color:#1c1c1c;transform:scaleX(0.8818);">KPIs</span>
<div class="b " style="left:2035.20px;top:1681.00px;width:1.00px;height:26.00px;background:#555;"></div>
<div class="b " style="left:2042.30px;top:1676.00px;width:30.00px;height:35.70px;background:#4bb4ea;border-radius:6px 0 0 6px;overflow:hidden;"></div>
<span class="t" style="left:2053.25px;top:1683px;font-size:21.60px;line-height:25px;color:#1c1c1c;transform:scaleX(0.7737);clip-path:inset(0 0 0 0);">Sc</span>
<div class="b " style="left:2072.30px;top:1672.00px;width:12.00px;height:44.00px;background:#0a0a0a;"></div>
<div class="b " style="left:2216.00px;top:1680.00px;width:643.00px;height:26.00px;background:#161616;border-radius:13px;"></div>
<div class="b " style="left:2242.00px;top:1687.00px;width:560.00px;height:12.00px;background:#9c9c9c;border-radius:6px;"></div>
<span class="t" style="left:25.99px;top:1727px;font-size:15.90px;line-height:17px;color:#e0e0e0;transform:scaleX(0.9535);">Ready</span>
<span class="t" style="left:172.91px;top:1727px;font-size:15.90px;line-height:17px;color:#fff;font-weight:bold;transform:scaleX(0.9887);">Accessibility: Investigate</span>
<span class="t" style="left:2839.50px;top:1727px;font-size:15.90px;line-height:17px;color:#e0e0e0;transform:scaleX(1.0063);">110%</span>
<div class="b " style="left:2443.00px;top:1718.00px;width:62.00px;height:33.00px;background:#262626;"></div>
<span class="t" style="left:50.89px;top:194px;font-size:17.80px;line-height:20px;color:#fff;transform:scaleX(0.9183);">Paste</span>
<span class="t" style="left:141.61px;top:143px;font-size:17.80px;line-height:20px;color:#fff;transform:scaleX(1.0041);">Cut</span>
<span class="t" style="left:141.60px;top:181px;font-size:17.80px;line-height:20px;color:#fff;transform:scaleX(1.0105);">Copy</span>
<span class="t" style="left:141.09px;top:221px;font-size:17.80px;line-height:20px;color:#fff;transform:scaleX(0.9875);">Format Painter</span>
<span class="t" style="left:108.69px;top:252px;font-size:17.20px;line-height:20px;color:#fff;transform:scaleX(0.9411);">Clipboard</span>
<div class="b " style="left:295.20px;top:146.40px;width:180.20px;height:35.20px;border:1px solid #5e5e5e;border-radius:6px;"></div>
<div class="b " style="left:479.30px;top:146.40px;width:64.30px;height:35.20px;border:1px solid #5e5e5e;border-radius:6px;"></div>
<span class="t" style="left:298.14px;top:155px;font-size:17.80px;line-height:20px;color:#fff;">Tahoma</span>
<span class="t" style="left:481.76px;top:155px;font-size:17.80px;line-height:20px;color:#fff;transform:scaleX(1.0408);">8</span>
<span class="t" style="left:554.20px;top:147px;font-size:26.60px;line-height:30px;color:#d0d0d0;transform:scaleX(0.9610);">A</span>
<span class="t" style="left:596.00px;top:153px;font-size:20.00px;line-height:22px;color:#d0d0d0;">A</span>
<span class="t" style="left:306.23px;top:198px;font-size:20.60px;line-height:23px;color:#d0d0d0;font-weight:bold;transform:scaleX(0.9472);">B</span>
<span class="t" style="left:382.75px;top:198px;font-size:20.60px;line-height:23px;color:#d0d0d0;transform:scaleX(1.0049);">U</span>
<span class="t" style="left:574.60px;top:195px;font-size:24.00px;line-height:27px;color:#d0d0d0;transform:scaleX(0.9524);">A</span>
<span class="t" style="left:429.33px;top:252px;font-size:17.20px;line-height:20px;color:#fff;transform:scaleX(0.9236);">Font</span>
<div class="b " style="left:685.00px;top:146.00px;width:36.00px;height:36.00px;background:#3e3e3e;border:1px solid #8c8c8c;border-radius:6px;"></div>
<span class="t" style="left:897.50px;top:155px;font-size:17.80px;line-height:20px;color:#fff;transform:scaleX(0.9787);">Wrap Text</span>
<span class="t" style="left:896.06px;top:202px;font-size:17.80px;line-height:20px;color:#fff;transform:scaleX(1.0123);">Merge &amp; Center</span>
<span class="t" style="left:810.40px;top:252px;font-size:17.20px;line-height:20px;color:#fff;transform:scaleX(0.9391);">Alignment</span>
<div class="b " style="left:1096.40px;top:146.40px;width:217.40px;height:35.20px;border:1px solid #5e5e5e;border-radius:6px;"></div>
<span class="t" style="left:1098.45px;top:155px;font-size:17.80px;line-height:20px;color:#fff;transform:scaleX(0.9524);">General</span>
<span class="t" style="left:1107.39px;top:197px;font-size:25.50px;line-height:28px;color:#d0d0d0;transform:scaleX(0.8356);">$</span>
<span class="t" style="left:1162.53px;top:196px;font-size:28.50px;line-height:32px;color:#d0d0d0;transform:scaleX(0.9756);">%</span>
<span class="t" style="left:1162.18px;top:252px;font-size:17.20px;line-height:20px;color:#fff;transform:scaleX(0.9598);">Number</span>
<span class="t" style="left:1346.20px;top:194px;font-size:17.80px;line-height:20px;color:#fff;">Insert</span>
<span class="t" style="left:1408.59px;top:194px;font-size:17.80px;line-height:20px;color:#fff;transform:scaleX(0.9918);">Delete</span>
<span class="t" style="left:1470.93px;top:192px;font-size:17.80px;line-height:20px;color:#fff;transform:scaleX(1.0344);">Format</span>
<span class="t" style="left:1417.66px;top:253px;font-size:17.20px;line-height:20px;color:#fff;transform:scaleX(0.8612);">Cells</span>
<span class="t" style="left:1593.60px;top:143px;font-size:17.80px;line-height:20px;color:#fff;transform:scaleX(1.0085);">AutoSum</span>
<span class="t" style="left:1592.55px;top:181px;font-size:17.80px;line-height:20px;color:#fff;transform:scaleX(0.9454);">Fill</span>
<span class="t" style="left:1593.08px;top:221px;font-size:17.80px;line-height:20px;color:#fff;transform:scaleX(0.9206);">Clear</span>
<span class="t" style="left:1729.60px;top:136px;font-size:26.80px;line-height:30px;color:#3c9bdc;transform:scaleX(0.8641);">A</span>
<span class="t" style="left:1724.35px;top:192px;font-size:17.80px;line-height:20px;color:#fff;transform:scaleX(1.0658);">Sort &amp;</span>
<span class="t" style="left:1723.48px;top:216px;font-size:17.80px;line-height:20px;color:#fff;transform:scaleX(0.9944);">Filter</span>
<span class="t" style="left:1793.80px;top:192px;font-size:17.80px;line-height:20px;color:#fff;transform:scaleX(1.0534);">Find &amp;</span>
<span class="t" style="left:1789.75px;top:216px;font-size:17.80px;line-height:20px;color:#fff;transform:scaleX(0.9302);">Select</span>
<span class="t" style="left:1681.31px;top:253px;font-size:17.20px;line-height:20px;color:#fff;transform:scaleX(0.9354);">Editing</span>
<span class="t" style="left:1885.40px;top:192px;font-size:17.80px;line-height:20px;color:#fff;transform:scaleX(1.0348);">Add-ins</span>
<span class="t" style="left:1888.30px;top:253px;font-size:17.20px;line-height:20px;color:#fff;transform:scaleX(0.9184);">Add-ins</span>
<span class="t" style="left:1980.30px;top:192px;font-size:17.80px;line-height:20px;color:#fff;transform:scaleX(0.9702);">Analyze</span>
<span class="t" style="left:1991.30px;top:216px;font-size:17.80px;line-height:20px;color:#fff;transform:scaleX(0.9800);">Data</span>
<svg class="ov" width="2902" height="1762" viewBox="0 0 2902 1762">
<path d="M351.25 44.25 L358.00 51.75 L364.75 44.25" fill="none" stroke="#fff" stroke-width="2.00" stroke-linecap="round" stroke-linejoin="round"/>
<path d="M44 282 L44 297 L29 297 Z" fill="#5a5a5a"/>
<path d="M2869.5 295 L2876 286 L2882.5 295 Z" fill="#9c9c9c" stroke="#9c9c9c" stroke-width="1.5" stroke-linejoin="round"/>
<path d="M2869.5 1654.5 L2876 1663 L2882.5 1654.5 Z" fill="#9c9c9c" stroke="#9c9c9c" stroke-width="1.5" stroke-linejoin="round"/>
<path d="M53.5 1685 L47 1692.7 L53.5 1700.4" fill="none" stroke="#8a8a8a" stroke-width="1.60" stroke-linejoin="round" stroke-linecap="round" />
<path d="M96 1685 L102.5 1692.7 L96 1700.4" fill="none" stroke="#e0e0e0" stroke-width="1.60" stroke-linejoin="round" stroke-linecap="round" />
<circle cx="2089.20" cy="1693.00" r="2.10" fill="#e6e6e6"/>
<circle cx="2095.50" cy="1693.00" r="2.10" fill="#e6e6e6"/>
<circle cx="2101.80" cy="1693.00" r="2.10" fill="#e6e6e6"/>
<line x1="2135.50" y1="1693.20" x2="2152.00" y2="1693.20" stroke="#e6e6e6" stroke-width="1.70" stroke-linecap="butt"/>
<line x1="2143.70" y1="1685.00" x2="2143.70" y2="1701.50" stroke="#e6e6e6" stroke-width="1.70" stroke-linecap="butt"/>
<rect x="2190.40" y="1686.60" width="3.00" height="3.00" fill="#e6e6e6"/>
<rect x="2190.40" y="1693.20" width="3.00" height="3.00" fill="#e6e6e6"/>
<rect x="2190.40" y="1699.80" width="3.00" height="3.00" fill="#e6e6e6"/>
<path d="M2233.5 1686.5 L2225 1693 L2233.5 1699.5 Z" fill="#9c9c9c" stroke="#9c9c9c" stroke-width="1.2" stroke-linejoin="round"/>
<path d="M2842.5 1686.5 L2851 1693 L2842.5 1699.5 Z" fill="#9c9c9c" stroke="#9c9c9c" stroke-width="1.2" stroke-linejoin="round"/>
<rect x="100.00" y="1727.00" width="20.50" height="16.00" fill="none" stroke="#fff" stroke-width="1.80"/>
<line x1="100.00" y1="1731.20" x2="120.50" y2="1731.20" stroke="#fff" stroke-width="1.60" stroke-linecap="butt"/>
<line x1="103.50" y1="1735.40" x2="108.50" y2="1735.40" stroke="#fff" stroke-width="1.60" stroke-linecap="butt"/>
<line x1="103.50" y1="1739.00" x2="107.00" y2="1739.00" stroke="#fff" stroke-width="1.60" stroke-linecap="butt"/>
<circle cx="114.00" cy="1739.30" r="5.60" fill="#141414" stroke="#fff" stroke-width="1.80"/>
<circle cx="114.00" cy="1739.30" r="2.80" fill="#fff"/>
<circle cx="155.80" cy="1727.30" r="2.40" fill="none" stroke="#fff" stroke-width="1.70"/>
<path d="M147 1729.5 Q151 1733.5 154 1733.5 L158 1733.5 Q161 1733.5 164.8 1729" fill="none" stroke="#fff" stroke-width="1.90" stroke-linejoin="round" stroke-linecap="round" />
<path d="M154 1733.5 L153.6 1738.5 Q152.5 1742 150.5 1745.5 M158 1733.5 L158.2 1737" fill="none" stroke="#fff" stroke-width="1.90" stroke-linejoin="round" stroke-linecap="round" />
<path d="M156 1741 L153.8 1745.5" fill="none" stroke="#fff" stroke-width="1.70" stroke-linejoin="round" stroke-linecap="round" />
<path d="M158 1738 L167 1745.5 M166.5 1738 L158.5 1745.5" fill="none" stroke="#fff" stroke-width="1.80" stroke-linejoin="round" stroke-linecap="round" />
<rect x="2464.70" y="1725.00" width="19.50" height="18.50" fill="none" stroke="#fff" stroke-width="1.60"/>
<line x1="2471.20" y1="1725.00" x2="2471.20" y2="1743.50" stroke="#fff" stroke-width="1.40" stroke-linecap="butt"/>
<line x1="2464.70" y1="1731.17" x2="2484.20" y2="1731.17" stroke="#fff" stroke-width="1.40" stroke-linecap="butt"/>
<line x1="2477.70" y1="1725.00" x2="2477.70" y2="1743.50" stroke="#fff" stroke-width="1.40" stroke-linecap="butt"/>
<line x1="2464.70" y1="1737.33" x2="2484.20" y2="1737.33" stroke="#fff" stroke-width="1.40" stroke-linecap="butt"/>
<rect x="2524.70" y="1725.00" width="20.00" height="18.50" fill="none" stroke="#e0e0e0" stroke-width="1.60"/>
<rect x="2529.50" y="1729.50" width="10.40" height="10.00" fill="none" stroke="#e0e0e0" stroke-width="1.30"/>
<line x1="2532.00" y1="1733.00" x2="2537.50" y2="1733.00" stroke="#e0e0e0" stroke-width="1.10" stroke-linecap="butt"/>
<line x1="2532.00" y1="1736.00" x2="2537.50" y2="1736.00" stroke="#e0e0e0" stroke-width="1.10" stroke-linecap="butt"/>
<rect x="2585.00" y="1725.00" width="19.50" height="18.50" fill="none" stroke="#e0e0e0" stroke-width="1.60"/>
<path d="M2590 1725 L2590 1734.5 L2599.5 1734.5 L2599.5 1725" fill="none" stroke="#e0e0e0" stroke-width="1.40" stroke-linejoin="round" stroke-linecap="round" />
<line x1="2585.00" y1="1738.50" x2="2590.00" y2="1738.50" stroke="#e0e0e0" stroke-width="1.20" stroke-linecap="butt"/>
<line x1="2633.50" y1="1734.80" x2="2644.00" y2="1734.80" stroke="#e0e0e0" stroke-width="1.40" stroke-linecap="butt"/>
<line x1="2653.50" y1="1734.80" x2="2800.50" y2="1734.80" stroke="#bdbdbd" stroke-width="1.30" stroke-linecap="butt"/>
<rect x="2726.00" y="1725.50" width="7.50" height="17.50" fill="#bdbdbd" rx="1.00"/>
<line x1="2810.00" y1="1734.80" x2="2820.00" y2="1734.80" stroke="#e0e0e0" stroke-width="1.40" stroke-linecap="butt"/>
<line x1="2815.00" y1="1729.80" x2="2815.00" y2="1739.80" stroke="#e0e0e0" stroke-width="1.40" stroke-linecap="butt"/>
<clipPath id="rc25"><rect x="11" y="1044.30" width="36" height="9.20"/></clipPath>
<g clip-path="url(#rc25)">
<text x="29.30" y="1053.00" font-size="17.20" fill="#e6e6e6" text-anchor="middle" >25</text>
</g>
<clipPath id="rc45"><rect x="11" y="1643.90" width="36" height="9.20"/></clipPath>
<g clip-path="url(#rc45)">
<text x="29.30" y="1652.00" font-size="17.20" fill="#e6e6e6" text-anchor="middle" >45</text>
</g>
<path d="M1861.5 1669.6 Q1867 1669.6 1867 1675.5 L1867 1669.6 Z" fill="#fff"/>
<path d="M1957.8 1669.6 Q1952.3 1669.6 1952.3 1675.5 L1952.3 1669.6 Z" fill="#fff"/>
<text x="324.34" y="497.00" font-size="35.60" fill="#000" font-weight="bold" textLength="550.95" lengthAdjust="spacingAndGlyphs" stroke="#000" stroke-width="0.9">REVENUE BREAKDOWN - $'000</text>
<rect x="140.20" y="537.00" width="9.50" height="9.60" fill="#4bb3e8"/>
<text x="154.00" y="548.00" font-size="19.30" fill="#111" textLength="151.53" lengthAdjust="spacingAndGlyphs" >Acting Performance</text>
<rect x="371.20" y="537.00" width="9.50" height="9.60" fill="#4e52d0"/>
<text x="383.63" y="548.00" font-size="19.30" fill="#111" textLength="150.83" lengthAdjust="spacingAndGlyphs" >Endorsement Deals</text>
<rect x="600.00" y="537.00" width="9.50" height="9.60" fill="#f07c70"/>
<text x="612.59" y="548.00" font-size="19.30" fill="#111" textLength="108.88" lengthAdjust="spacingAndGlyphs" >Music Income</text>
<rect x="786.20" y="537.00" width="9.50" height="9.60" fill="#f5b400"/>
<rect x="800.20" y="540.70" width="5.50" height="2.10" fill="#111"/>
<rect x="871.80" y="537.00" width="9.50" height="9.60" fill="#2fb5a8"/>
<rect x="885.80" y="540.70" width="5.50" height="2.10" fill="#111"/>
<rect x="957.30" y="537.00" width="9.50" height="9.60" fill="#6aa53a"/>
<rect x="971.30" y="540.70" width="5.50" height="2.10" fill="#111"/>
<rect x="1042.90" y="537.00" width="9.50" height="9.60" fill="#8fa2d4"/>
<rect x="1056.90" y="540.70" width="5.50" height="2.10" fill="#111"/>
<rect x="1128.50" y="537.00" width="9.50" height="9.60" fill="#f2a98a"/>
<rect x="1142.50" y="540.70" width="5.50" height="2.10" fill="#111"/>
<rect x="1214.10" y="537.00" width="9.50" height="9.60" fill="#c2c2c2"/>
<rect x="1228.10" y="540.70" width="5.50" height="2.10" fill="#111"/>
<rect x="1299.70" y="537.00" width="9.50" height="9.60" fill="#ffd27f"/>
<rect x="1313.70" y="540.70" width="5.50" height="2.10" fill="#111"/>
<text x="107.52" y="621.00" font-size="20.60" fill="#000" font-weight="bold" textLength="67.42" lengthAdjust="spacingAndGlyphs" stroke="#000" stroke-width="0.5">16,000</text>
<text x="107.52" y="663.00" font-size="20.60" fill="#000" font-weight="bold" textLength="67.42" lengthAdjust="spacingAndGlyphs" stroke="#000" stroke-width="0.5">14,000</text>
<text x="107.52" y="706.00" font-size="20.60" fill="#000" font-weight="bold" textLength="67.42" lengthAdjust="spacingAndGlyphs" stroke="#000" stroke-width="0.5">12,000</text>
<text x="107.52" y="749.00" font-size="20.60" fill="#000" font-weight="bold" textLength="67.42" lengthAdjust="spacingAndGlyphs" stroke="#000" stroke-width="0.5">10,000</text>
<text x="119.87" y="792.00" font-size="20.60" fill="#000" font-weight="bold" textLength="55.16" lengthAdjust="spacingAndGlyphs" stroke="#000" stroke-width="0.5">8,000</text>
<text x="119.87" y="834.00" font-size="20.60" fill="#000" font-weight="bold" textLength="55.16" lengthAdjust="spacingAndGlyphs" stroke="#000" stroke-width="0.5">6,000</text>
<text x="119.87" y="877.00" font-size="20.60" fill="#000" font-weight="bold" textLength="55.16" lengthAdjust="spacingAndGlyphs" stroke="#000" stroke-width="0.5">4,000</text>
<text x="119.87" y="920.00" font-size="20.60" fill="#000" font-weight="bold" textLength="55.16" lengthAdjust="spacingAndGlyphs" stroke="#000" stroke-width="0.5">2,000</text>
<rect x="156.20" y="955.40" width="6.50" height="2.60" fill="#000"/>
<line x1="199.50" y1="613.50" x2="1319.50" y2="613.50" stroke="#62a8cc" stroke-width="1.00" stroke-linecap="butt"/>
<line x1="199.50" y1="656.50" x2="1319.50" y2="656.50" stroke="#62a8cc" stroke-width="1.00" stroke-linecap="butt"/>
<line x1="199.50" y1="699.50" x2="1319.50" y2="699.50" stroke="#62a8cc" stroke-width="1.00" stroke-linecap="butt"/>
<line x1="199.50" y1="741.50" x2="1319.50" y2="741.50" stroke="#62a8cc" stroke-width="1.00" stroke-linecap="butt"/>
<line x1="199.50" y1="784.50" x2="1319.50" y2="784.50" stroke="#62a8cc" stroke-width="1.00" stroke-linecap="butt"/>
<line x1="199.50" y1="827.50" x2="1319.50" y2="827.50" stroke="#62a8cc" stroke-width="1.00" stroke-linecap="butt"/>
<line x1="199.50" y1="870.50" x2="1319.50" y2="870.50" stroke="#62a8cc" stroke-width="1.00" stroke-linecap="butt"/>
<line x1="199.50" y1="912.50" x2="1319.50" y2="912.50" stroke="#62a8cc" stroke-width="1.00" stroke-linecap="butt"/>
<rect x="241.80" y="939.00" width="140.00" height="2.10" fill="#f07c70"/>
<rect x="241.80" y="941.10" width="140.00" height="3.60" fill="#4e52d0"/>
<rect x="241.80" y="944.70" width="140.00" height="10.50" fill="#4bb3e8"/>
<text x="286.32" y="1008.00" font-size="20.60" fill="#000" font-weight="bold" textLength="50.47" lengthAdjust="spacingAndGlyphs" stroke="#000" stroke-width="0.5">2026</text>
<rect x="465.80" y="911.00" width="140.00" height="4.30" fill="#f07c70"/>
<rect x="465.80" y="915.30" width="140.00" height="11.70" fill="#4e52d0"/>
<rect x="465.80" y="927.00" width="140.00" height="28.20" fill="#4bb3e8"/>
<text x="510.32" y="1008.00" font-size="20.60" fill="#000" font-weight="bold" textLength="50.58" lengthAdjust="spacingAndGlyphs" stroke="#000" stroke-width="0.5">2027</text>
<rect x="689.80" y="862.10" width="140.00" height="8.10" fill="#f07c70"/>
<rect x="689.80" y="870.20" width="140.00" height="27.90" fill="#4e52d0"/>
<rect x="689.80" y="898.10" width="140.00" height="57.10" fill="#4bb3e8"/>
<text x="734.32" y="1008.00" font-size="20.60" fill="#000" font-weight="bold" textLength="50.23" lengthAdjust="spacingAndGlyphs" stroke="#000" stroke-width="0.5">2028</text>
<rect x="913.80" y="786.40" width="140.00" height="15.00" fill="#f07c70"/>
<rect x="913.80" y="801.40" width="140.00" height="52.60" fill="#4e52d0"/>
<rect x="913.80" y="854.00" width="140.00" height="101.20" fill="#4bb3e8"/>
<text x="958.32" y="1008.00" font-size="20.60" fill="#000" font-weight="bold" textLength="50.47" lengthAdjust="spacingAndGlyphs" stroke="#000" stroke-width="0.5">2029</text>
<rect x="1137.80" y="662.90" width="140.00" height="28.10" fill="#f07c70"/>
<rect x="1137.80" y="691.00" width="140.00" height="93.30" fill="#4e52d0"/>
<rect x="1137.80" y="784.30" width="140.00" height="170.90" fill="#4bb3e8"/>
<text x="1182.32" y="1008.00" font-size="20.60" fill="#000" font-weight="bold" textLength="50.47" lengthAdjust="spacingAndGlyphs" stroke="#000" stroke-width="0.5">2030</text>
<line x1="199.50" y1="955.20" x2="1319.50" y2="955.20" stroke="#4aa5dc" stroke-width="2.20" stroke-linecap="butt"/>
<text x="1822.94" y="496.00" font-size="35.60" fill="#000" font-weight="bold" textLength="551.95" lengthAdjust="spacingAndGlyphs" stroke="#000" stroke-width="0.9">REVENUE BREAKDOWN - $'000</text>
<rect x="1487.00" y="526.80" width="9.50" height="9.60" fill="#4bb3e8"/>
<text x="1500.20" y="538.00" font-size="19.30" fill="#111" textLength="151.83" lengthAdjust="spacingAndGlyphs" >Acting Performance</text>
<rect x="1711.00" y="526.80" width="9.50" height="9.60" fill="#4e52d0"/>
<text x="1722.82" y="538.00" font-size="19.30" fill="#111" textLength="151.34" lengthAdjust="spacingAndGlyphs" >Endorsement Deals</text>
<rect x="1933.20" y="526.80" width="9.50" height="9.60" fill="#f07c70"/>
<text x="1945.59" y="538.00" font-size="19.30" fill="#111" textLength="108.98" lengthAdjust="spacingAndGlyphs" >Music Income</text>
<rect x="2113.00" y="526.80" width="9.50" height="9.60" fill="#f5b400"/>
<rect x="2126.50" y="530.50" width="5.50" height="2.10" fill="#111"/>
<rect x="2192.20" y="526.80" width="9.50" height="9.60" fill="#2fb5a8"/>
<rect x="2205.70" y="530.50" width="5.50" height="2.10" fill="#111"/>
<rect x="2270.60" y="526.80" width="9.50" height="9.60" fill="#6aa53a"/>
<rect x="2284.10" y="530.50" width="5.50" height="2.10" fill="#111"/>
<rect x="2349.60" y="526.80" width="9.50" height="9.60" fill="#8fa2d4"/>
<rect x="2363.10" y="530.50" width="5.50" height="2.10" fill="#111"/>
<rect x="2428.80" y="526.80" width="9.50" height="9.60" fill="#f2a98a"/>
<rect x="2442.30" y="530.50" width="5.50" height="2.10" fill="#111"/>
<rect x="2508.00" y="526.80" width="9.50" height="9.60" fill="#c2c2c2"/>
<rect x="2521.50" y="530.50" width="5.50" height="2.10" fill="#111"/>
<rect x="2586.80" y="526.80" width="9.50" height="9.60" fill="#ffd27f"/>
<rect x="2600.30" y="530.50" width="5.50" height="2.10" fill="#111"/>
<text x="1440.07" y="620.00" font-size="20.60" fill="#000" font-weight="bold" textLength="55.16" lengthAdjust="spacingAndGlyphs" stroke="#000" stroke-width="0.5">1,400</text>
<text x="1440.07" y="669.00" font-size="20.60" fill="#000" font-weight="bold" textLength="55.16" lengthAdjust="spacingAndGlyphs" stroke="#000" stroke-width="0.5">1,200</text>
<text x="1440.07" y="717.00" font-size="20.60" fill="#000" font-weight="bold" textLength="55.16" lengthAdjust="spacingAndGlyphs" stroke="#000" stroke-width="0.5">1,000</text>
<text x="1458.47" y="766.00" font-size="20.60" fill="#000" font-weight="bold" textLength="36.78" lengthAdjust="spacingAndGlyphs" stroke="#000" stroke-width="0.5">800</text>
<text x="1458.47" y="815.00" font-size="20.60" fill="#000" font-weight="bold" textLength="36.78" lengthAdjust="spacingAndGlyphs" stroke="#000" stroke-width="0.5">600</text>
<text x="1458.47" y="864.00" font-size="20.60" fill="#000" font-weight="bold" textLength="36.78" lengthAdjust="spacingAndGlyphs" stroke="#000" stroke-width="0.5">400</text>
<text x="1458.47" y="912.00" font-size="20.60" fill="#000" font-weight="bold" textLength="36.78" lengthAdjust="spacingAndGlyphs" stroke="#000" stroke-width="0.5">200</text>
<rect x="1476.40" y="953.90" width="6.50" height="2.60" fill="#000"/>
<line x1="1518.80" y1="612.50" x2="2791.60" y2="612.50" stroke="#62a8cc" stroke-width="1.00" stroke-linecap="butt"/>
<line x1="1518.80" y1="661.50" x2="2791.60" y2="661.50" stroke="#62a8cc" stroke-width="1.00" stroke-linecap="butt"/>
<line x1="1518.80" y1="710.50" x2="2791.60" y2="710.50" stroke="#62a8cc" stroke-width="1.00" stroke-linecap="butt"/>
<line x1="1518.80" y1="758.50" x2="2791.60" y2="758.50" stroke="#62a8cc" stroke-width="1.00" stroke-linecap="butt"/>
<line x1="1518.80" y1="807.50" x2="2791.60" y2="807.50" stroke="#62a8cc" stroke-width="1.00" stroke-linecap="butt"/>
<line x1="1518.80" y1="856.50" x2="2791.60" y2="856.50" stroke="#62a8cc" stroke-width="1.00" stroke-linecap="butt"/>
<line x1="1518.80" y1="905.50" x2="2791.60" y2="905.50" stroke="#62a8cc" stroke-width="1.00" stroke-linecap="butt"/>
<polygon points="1518.80,953.70 1518.80,949.80 1540.37,947.48 1561.95,945.17 1583.52,942.85 1605.09,940.54 1626.66,938.22 1648.24,935.90 1669.81,933.59 1691.38,931.27 1712.96,931.27 1734.53,931.27 1756.10,931.27 1777.67,924.69 1799.25,922.24 1820.82,919.79 1842.39,917.34 1863.97,914.89 1885.54,912.44 1907.11,909.99 1928.68,907.54 1950.26,905.09 1971.83,905.09 1993.40,905.09 2014.98,905.09 2036.55,890.07 2058.12,884.98 2079.69,879.89 2101.27,874.80 2122.84,869.72 2144.41,864.63 2165.99,859.54 2187.56,854.45 2209.13,849.36 2230.71,849.36 2252.28,849.36 2273.85,849.36 2295.42,829.86 2317.00,822.31 2338.57,814.76 2360.14,807.21 2381.72,799.66 2403.29,792.12 2424.86,784.57 2446.43,777.02 2468.01,769.47 2489.58,769.47 2511.15,769.47 2532.73,769.47 2554.30,737.22 2575.87,724.97 2597.44,712.72 2619.02,700.47 2640.59,688.22 2662.16,675.97 2683.74,663.72 2705.31,651.47 2726.88,639.22 2748.45,639.22 2770.03,639.22 2791.60,639.22 2791.60,953.70" fill="#f07c70"/>
<polygon points="1518.80,953.70 1518.80,950.04 1540.37,947.88 1561.95,945.72 1583.52,943.55 1605.09,941.39 1626.66,939.23 1648.24,937.06 1669.81,934.90 1691.38,932.73 1712.96,932.73 1734.53,932.73 1756.10,932.73 1777.67,926.71 1799.25,924.39 1820.82,922.06 1842.39,919.74 1863.97,917.41 1885.54,915.09 1907.11,912.76 1928.68,910.44 1950.26,908.11 1971.83,908.11 1993.40,908.11 2014.98,908.11 2036.55,895.78 2058.12,891.10 2079.69,886.43 2101.27,881.75 2122.84,877.08 2144.41,872.40 2165.99,867.73 2187.56,863.05 2209.13,858.38 2230.71,858.38 2252.28,858.38 2273.85,858.38 2295.42,840.83 2317.00,834.03 2338.57,827.24 2360.14,820.44 2381.72,813.65 2403.29,806.85 2424.86,800.05 2446.43,793.26 2468.01,786.46 2489.58,786.46 2511.15,786.46 2532.73,786.46 2554.30,756.72 2575.87,745.75 2597.44,734.78 2619.02,723.81 2640.59,712.84 2662.16,701.87 2683.74,690.90 2705.31,679.93 2726.88,668.96 2748.45,668.96 2770.03,668.96 2791.60,668.96 2791.60,953.70" fill="#4e52d0"/>
<polygon points="1518.80,953.70 1518.80,950.29 1540.37,948.65 1561.95,947.02 1583.52,945.39 1605.09,943.75 1626.66,942.12 1648.24,940.49 1669.81,938.85 1691.38,937.22 1712.96,937.22 1734.53,937.22 1756.10,937.22 1777.67,934.81 1799.25,933.24 1820.82,931.67 1842.39,930.10 1863.97,928.53 1885.54,926.96 1907.11,925.39 1928.68,923.82 1950.26,922.25 1971.83,922.25 1993.40,922.25 2014.98,922.25 2036.55,914.69 2058.12,911.59 2079.69,908.48 2101.27,905.37 2122.84,902.26 2144.41,899.15 2165.99,896.04 2187.56,892.94 2209.13,889.83 2230.71,889.83 2252.28,889.83 2273.85,889.83 2295.42,878.61 2317.00,874.10 2338.57,869.59 2360.14,865.08 2381.72,860.57 2403.29,856.06 2424.86,851.55 2446.43,847.04 2468.01,842.53 2489.58,842.53 2511.15,842.53 2532.73,842.53 2554.30,825.47 2575.87,818.40 2597.44,811.33 2619.02,804.26 2640.59,797.19 2662.16,790.12 2683.74,783.05 2705.31,775.98 2726.88,768.91 2748.45,768.91 2770.03,768.91 2791.60,768.91 2791.60,953.70" fill="#4bb3e8"/>
<text x="1523.30" y="980.60" font-size="19.60" fill="#000" text-anchor="end" transform="rotate(-45 1523.30 980.60)" >Jan-26</text>
<text x="1566.45" y="980.60" font-size="19.60" fill="#000" text-anchor="end" transform="rotate(-45 1566.45 980.60)" >Mar-26</text>
<text x="1609.59" y="980.60" font-size="19.60" fill="#000" text-anchor="end" transform="rotate(-45 1609.59 980.60)" >May-26</text>
<text x="1652.74" y="980.60" font-size="19.60" fill="#000" text-anchor="end" transform="rotate(-45 1652.74 980.60)" >Jul-26</text>
<text x="1695.88" y="980.60" font-size="19.60" fill="#000" text-anchor="end" transform="rotate(-45 1695.88 980.60)" >Sep-26</text>
<text x="1739.03" y="980.60" font-size="19.60" fill="#000" text-anchor="end" transform="rotate(-45 1739.03 980.60)" >Nov-26</text>
<text x="1782.17" y="980.60" font-size="19.60" fill="#000" text-anchor="end" transform="rotate(-45 1782.17 980.60)" >Jan-27</text>
<text x="1825.32" y="980.60" font-size="19.60" fill="#000" text-anchor="end" transform="rotate(-45 1825.32 980.60)" >Mar-27</text>
<text x="1868.47" y="980.60" font-size="19.60" fill="#000" text-anchor="end" transform="rotate(-45 1868.47 980.60)" >May-27</text>
<text x="1911.61" y="980.60" font-size="19.60" fill="#000" text-anchor="end" transform="rotate(-45 1911.61 980.60)" >Jul-27</text>
<text x="1954.76" y="980.60" font-size="19.60" fill="#000" text-anchor="end" transform="rotate(-45 1954.76 980.60)" >Sep-27</text>
<text x="1997.90" y="980.60" font-size="19.60" fill="#000" text-anchor="end" transform="rotate(-45 1997.90 980.60)" >Nov-27</text>
<text x="2041.05" y="980.60" font-size="19.60" fill="#000" text-anchor="end" transform="rotate(-45 2041.05 980.60)" >Jan-28</text>
<text x="2084.19" y="980.60" font-size="19.60" fill="#000" text-anchor="end" transform="rotate(-45 2084.19 980.60)" >Mar-28</text>
<text x="2127.34" y="980.60" font-size="19.60" fill="#000" text-anchor="end" transform="rotate(-45 2127.34 980.60)" >May-28</text>
<text x="2170.49" y="980.60" font-size="19.60" fill="#000" text-anchor="end" transform="rotate(-45 2170.49 980.60)" >Jul-28</text>
<text x="2213.63" y="980.60" font-size="19.60" fill="#000" text-anchor="end" transform="rotate(-45 2213.63 980.60)" >Sep-28</text>
<text x="2256.78" y="980.60" font-size="19.60" fill="#000" text-anchor="end" transform="rotate(-45 2256.78 980.60)" >Nov-28</text>
<text x="2299.92" y="980.60" font-size="19.60" fill="#000" text-anchor="end" transform="rotate(-45 2299.92 980.60)" >Jan-29</text>
<text x="2343.07" y="980.60" font-size="19.60" fill="#000" text-anchor="end" transform="rotate(-45 2343.07 980.60)" >Mar-29</text>
<text x="2386.22" y="980.60" font-size="19.60" fill="#000" text-anchor="end" transform="rotate(-45 2386.22 980.60)" >May-29</text>
<text x="2429.36" y="980.60" font-size="19.60" fill="#000" text-anchor="end" transform="rotate(-45 2429.36 980.60)" >Jul-29</text>
<text x="2472.51" y="980.60" font-size="19.60" fill="#000" text-anchor="end" transform="rotate(-45 2472.51 980.60)" >Sep-29</text>
<text x="2515.65" y="980.60" font-size="19.60" fill="#000" text-anchor="end" transform="rotate(-45 2515.65 980.60)" >Nov-29</text>
<text x="2558.80" y="980.60" font-size="19.60" fill="#000" text-anchor="end" transform="rotate(-45 2558.80 980.60)" >Jan-30</text>
<text x="2601.94" y="980.60" font-size="19.60" fill="#000" text-anchor="end" transform="rotate(-45 2601.94 980.60)" >Mar-30</text>
<text x="2645.09" y="980.60" font-size="19.60" fill="#000" text-anchor="end" transform="rotate(-45 2645.09 980.60)" >May-30</text>
<text x="2688.24" y="980.60" font-size="19.60" fill="#000" text-anchor="end" transform="rotate(-45 2688.24 980.60)" >Jul-30</text>
<text x="2731.38" y="980.60" font-size="19.60" fill="#000" text-anchor="end" transform="rotate(-45 2731.38 980.60)" >Sep-30</text>
<text x="2774.53" y="980.60" font-size="19.60" fill="#000" text-anchor="end" transform="rotate(-45 2774.53 980.60)" >Nov-30</text>
<text x="442.13" y="1098.00" font-size="35.60" fill="#000" font-weight="bold" textLength="416.81" lengthAdjust="spacingAndGlyphs" stroke="#000" stroke-width="0.9">CASH BALANCE - $'000</text>
<text x="94.32" y="1152.00" font-size="20.60" fill="#000" font-weight="bold" textLength="67.42" lengthAdjust="spacingAndGlyphs" stroke="#000" stroke-width="0.5">12,000</text>
<text x="94.32" y="1220.00" font-size="20.60" fill="#000" font-weight="bold" textLength="67.42" lengthAdjust="spacingAndGlyphs" stroke="#000" stroke-width="0.5">10,000</text>
<text x="106.67" y="1289.00" font-size="20.60" fill="#000" font-weight="bold" textLength="55.16" lengthAdjust="spacingAndGlyphs" stroke="#000" stroke-width="0.5">8,000</text>
<text x="106.67" y="1358.00" font-size="20.60" fill="#000" font-weight="bold" textLength="55.16" lengthAdjust="spacingAndGlyphs" stroke="#000" stroke-width="0.5">6,000</text>
<text x="106.67" y="1426.00" font-size="20.60" fill="#000" font-weight="bold" textLength="55.16" lengthAdjust="spacingAndGlyphs" stroke="#000" stroke-width="0.5">4,000</text>
<text x="106.67" y="1495.00" font-size="20.60" fill="#000" font-weight="bold" textLength="55.16" lengthAdjust="spacingAndGlyphs" stroke="#000" stroke-width="0.5">2,000</text>
<rect x="143.00" y="1556.20" width="6.50" height="2.60" fill="#000"/>
<line x1="186.20" y1="1144.50" x2="1316.20" y2="1144.50" stroke="#62a8cc" stroke-width="1.00" stroke-linecap="butt"/>
<line x1="186.20" y1="1213.50" x2="1316.20" y2="1213.50" stroke="#62a8cc" stroke-width="1.00" stroke-linecap="butt"/>
<line x1="186.20" y1="1281.50" x2="1316.20" y2="1281.50" stroke="#62a8cc" stroke-width="1.00" stroke-linecap="butt"/>
<line x1="186.20" y1="1350.50" x2="1316.20" y2="1350.50" stroke="#62a8cc" stroke-width="1.00" stroke-linecap="butt"/>
<line x1="186.20" y1="1419.50" x2="1316.20" y2="1419.50" stroke="#62a8cc" stroke-width="1.00" stroke-linecap="butt"/>
<line x1="186.20" y1="1487.50" x2="1316.20" y2="1487.50" stroke="#62a8cc" stroke-width="1.00" stroke-linecap="butt"/>
<rect x="228.20" y="1543.90" width="142.00" height="12.10" fill="#4bb3e8"/>
<text x="274.02" y="1609.00" font-size="20.60" fill="#000" font-weight="bold" textLength="50.47" lengthAdjust="spacingAndGlyphs" stroke="#000" stroke-width="0.5">2026</text>
<line x1="299.20" y1="1556.00" x2="299.20" y2="1561.50" stroke="#3f6fb5" stroke-width="1.30" stroke-linecap="butt"/>
<rect x="454.20" y="1541.20" width="142.00" height="14.80" fill="#4bb3e8"/>
<text x="500.02" y="1609.00" font-size="20.60" fill="#000" font-weight="bold" textLength="50.58" lengthAdjust="spacingAndGlyphs" stroke="#000" stroke-width="0.5">2027</text>
<line x1="525.20" y1="1556.00" x2="525.20" y2="1561.50" stroke="#3f6fb5" stroke-width="1.30" stroke-linecap="butt"/>
<rect x="680.20" y="1508.00" width="142.00" height="48.00" fill="#4bb3e8"/>
<text x="726.02" y="1609.00" font-size="20.60" fill="#000" font-weight="bold" textLength="50.23" lengthAdjust="spacingAndGlyphs" stroke="#000" stroke-width="0.5">2028</text>
<line x1="751.20" y1="1556.00" x2="751.20" y2="1561.50" stroke="#3f6fb5" stroke-width="1.30" stroke-linecap="butt"/>
<rect x="906.20" y="1408.10" width="142.00" height="147.90" fill="#4bb3e8"/>
<text x="952.02" y="1609.00" font-size="20.60" fill="#000" font-weight="bold" textLength="50.47" lengthAdjust="spacingAndGlyphs" stroke="#000" stroke-width="0.5">2029</text>
<line x1="977.20" y1="1556.00" x2="977.20" y2="1561.50" stroke="#3f6fb5" stroke-width="1.30" stroke-linecap="butt"/>
<rect x="1132.20" y="1189.60" width="142.00" height="366.40" fill="#4bb3e8"/>
<text x="1178.02" y="1609.00" font-size="20.60" fill="#000" font-weight="bold" textLength="50.47" lengthAdjust="spacingAndGlyphs" stroke="#000" stroke-width="0.5">2030</text>
<line x1="1203.20" y1="1556.00" x2="1203.20" y2="1561.50" stroke="#3f6fb5" stroke-width="1.30" stroke-linecap="butt"/>
<line x1="186.20" y1="1556.00" x2="186.20" y2="1563.00" stroke="#3f6fb5" stroke-width="1.30" stroke-linecap="butt"/>
<line x1="412.20" y1="1556.00" x2="412.20" y2="1563.00" stroke="#3f6fb5" stroke-width="1.30" stroke-linecap="butt"/>
<line x1="638.20" y1="1556.00" x2="638.20" y2="1563.00" stroke="#3f6fb5" stroke-width="1.30" stroke-linecap="butt"/>
<line x1="864.20" y1="1556.00" x2="864.20" y2="1563.00" stroke="#3f6fb5" stroke-width="1.30" stroke-linecap="butt"/>
<line x1="1090.20" y1="1556.00" x2="1090.20" y2="1563.00" stroke="#3f6fb5" stroke-width="1.30" stroke-linecap="butt"/>
<line x1="1316.20" y1="1556.00" x2="1316.20" y2="1563.00" stroke="#3f6fb5" stroke-width="1.30" stroke-linecap="butt"/>
<line x1="186.20" y1="1556.00" x2="1316.20" y2="1556.00" stroke="#3f6fb5" stroke-width="2.00" stroke-linecap="butt"/>
<text x="1905.73" y="1094.00" font-size="35.60" fill="#000" font-weight="bold" textLength="417.31" lengthAdjust="spacingAndGlyphs" stroke="#000" stroke-width="0.9">CASH BALANCE - $'000</text>
<text x="1438.12" y="1155.00" font-size="20.60" fill="#000" font-weight="bold" textLength="67.42" lengthAdjust="spacingAndGlyphs" stroke="#000" stroke-width="0.5">12,000</text>
<text x="1438.12" y="1223.00" font-size="20.60" fill="#000" font-weight="bold" textLength="67.42" lengthAdjust="spacingAndGlyphs" stroke="#000" stroke-width="0.5">10,000</text>
<text x="1450.47" y="1291.00" font-size="20.60" fill="#000" font-weight="bold" textLength="55.16" lengthAdjust="spacingAndGlyphs" stroke="#000" stroke-width="0.5">8,000</text>
<text x="1450.47" y="1359.00" font-size="20.60" fill="#000" font-weight="bold" textLength="55.16" lengthAdjust="spacingAndGlyphs" stroke="#000" stroke-width="0.5">6,000</text>
<text x="1450.47" y="1427.00" font-size="20.60" fill="#000" font-weight="bold" textLength="55.16" lengthAdjust="spacingAndGlyphs" stroke="#000" stroke-width="0.5">4,000</text>
<text x="1450.47" y="1495.00" font-size="20.60" fill="#000" font-weight="bold" textLength="55.16" lengthAdjust="spacingAndGlyphs" stroke="#000" stroke-width="0.5">2,000</text>
<rect x="1486.80" y="1555.30" width="6.50" height="2.60" fill="#000"/>
<line x1="1529.80" y1="1147.50" x2="2791.60" y2="1147.50" stroke="#62a8cc" stroke-width="1.00" stroke-linecap="butt"/>
<line x1="1529.80" y1="1215.50" x2="2791.60" y2="1215.50" stroke="#62a8cc" stroke-width="1.00" stroke-linecap="butt"/>
<line x1="1529.80" y1="1283.50" x2="2791.60" y2="1283.50" stroke="#62a8cc" stroke-width="1.00" stroke-linecap="butt"/>
<line x1="1529.80" y1="1351.50" x2="2791.60" y2="1351.50" stroke="#62a8cc" stroke-width="1.00" stroke-linecap="butt"/>
<line x1="1529.80" y1="1419.50" x2="2791.60" y2="1419.50" stroke="#62a8cc" stroke-width="1.00" stroke-linecap="butt"/>
<line x1="1529.80" y1="1487.50" x2="2791.60" y2="1487.50" stroke="#62a8cc" stroke-width="1.00" stroke-linecap="butt"/>
<polygon points="1529.80,1555.10 1529.84,1527.66 1552.39,1531.31 1573.73,1531.31 1595.06,1534.97 1637.73,1538.63 1662.12,1539.85 1723.07,1542.29 1790.12,1543.51 1829.75,1545.33 1893.75,1545.33 1918.13,1544.11 1979.09,1542.29 2043.10,1539.24 2088.81,1537.41 2107.10,1534.97 2174.15,1526.44 2216.82,1520.34 2236.33,1515.46 2277.78,1506.93 2320.45,1497.18 2363.12,1484.38 2405.79,1469.75 2448.46,1451.46 2492.96,1428.91 2515.51,1417.93 2558.18,1396.60 2579.52,1383.19 2622.19,1350.88 2664.86,1315.53 2686.19,1296.02 2728.86,1254.57 2791.65,1192.39 2791.60,1555.10" fill="#4bb3e8"/>
<line x1="1529.80" y1="1555.10" x2="1529.80" y2="1561.10" stroke="#3f6fb5" stroke-width="1.30" stroke-linecap="butt"/>
<line x1="1551.19" y1="1555.10" x2="1551.19" y2="1558.60" stroke="#3f6fb5" stroke-width="1.30" stroke-linecap="butt"/>
<line x1="1572.57" y1="1555.10" x2="1572.57" y2="1558.60" stroke="#3f6fb5" stroke-width="1.30" stroke-linecap="butt"/>
<line x1="1593.96" y1="1555.10" x2="1593.96" y2="1561.10" stroke="#3f6fb5" stroke-width="1.30" stroke-linecap="butt"/>
<line x1="1615.35" y1="1555.10" x2="1615.35" y2="1558.60" stroke="#3f6fb5" stroke-width="1.30" stroke-linecap="butt"/>
<line x1="1636.73" y1="1555.10" x2="1636.73" y2="1558.60" stroke="#3f6fb5" stroke-width="1.30" stroke-linecap="butt"/>
<line x1="1658.12" y1="1555.10" x2="1658.12" y2="1561.10" stroke="#3f6fb5" stroke-width="1.30" stroke-linecap="butt"/>
<line x1="1679.51" y1="1555.10" x2="1679.51" y2="1558.60" stroke="#3f6fb5" stroke-width="1.30" stroke-linecap="butt"/>
<line x1="1700.89" y1="1555.10" x2="1700.89" y2="1558.60" stroke="#3f6fb5" stroke-width="1.30" stroke-linecap="butt"/>
<line x1="1722.28" y1="1555.10" x2="1722.28" y2="1561.10" stroke="#3f6fb5" stroke-width="1.30" stroke-linecap="butt"/>
<line x1="1743.66" y1="1555.10" x2="1743.66" y2="1558.60" stroke="#3f6fb5" stroke-width="1.30" stroke-linecap="butt"/>
<line x1="1765.05" y1="1555.10" x2="1765.05" y2="1558.60" stroke="#3f6fb5" stroke-width="1.30" stroke-linecap="butt"/>
<line x1="1786.44" y1="1555.10" x2="1786.44" y2="1561.10" stroke="#3f6fb5" stroke-width="1.30" stroke-linecap="butt"/>
<line x1="1807.82" y1="1555.10" x2="1807.82" y2="1558.60" stroke="#3f6fb5" stroke-width="1.30" stroke-linecap="butt"/>
<line x1="1829.21" y1="1555.10" x2="1829.21" y2="1558.60" stroke="#3f6fb5" stroke-width="1.30" stroke-linecap="butt"/>
<line x1="1850.60" y1="1555.10" x2="1850.60" y2="1561.10" stroke="#3f6fb5" stroke-width="1.30" stroke-linecap="butt"/>
<line x1="1871.98" y1="1555.10" x2="1871.98" y2="1558.60" stroke="#3f6fb5" stroke-width="1.30" stroke-linecap="butt"/>
<line x1="1893.37" y1="1555.10" x2="1893.37" y2="1558.60" stroke="#3f6fb5" stroke-width="1.30" stroke-linecap="butt"/>
<line x1="1914.76" y1="1555.10" x2="1914.76" y2="1561.10" stroke="#3f6fb5" stroke-width="1.30" stroke-linecap="butt"/>
<line x1="1936.14" y1="1555.10" x2="1936.14" y2="1558.60" stroke="#3f6fb5" stroke-width="1.30" stroke-linecap="butt"/>
<line x1="1957.53" y1="1555.10" x2="1957.53" y2="1558.60" stroke="#3f6fb5" stroke-width="1.30" stroke-linecap="butt"/>
<line x1="1978.92" y1="1555.10" x2="1978.92" y2="1561.10" stroke="#3f6fb5" stroke-width="1.30" stroke-linecap="butt"/>
<line x1="2000.30" y1="1555.10" x2="2000.30" y2="1558.60" stroke="#3f6fb5" stroke-width="1.30" stroke-linecap="butt"/>
<line x1="2021.69" y1="1555.10" x2="2021.69" y2="1558.60" stroke="#3f6fb5" stroke-width="1.30" stroke-linecap="butt"/>
<line x1="2043.07" y1="1555.10" x2="2043.07" y2="1561.10" stroke="#3f6fb5" stroke-width="1.30" stroke-linecap="butt"/>
<line x1="2064.46" y1="1555.10" x2="2064.46" y2="1558.60" stroke="#3f6fb5" stroke-width="1.30" stroke-linecap="butt"/>
<line x1="2085.85" y1="1555.10" x2="2085.85" y2="1558.60" stroke="#3f6fb5" stroke-width="1.30" stroke-linecap="butt"/>
<line x1="2107.23" y1="1555.10" x2="2107.23" y2="1561.10" stroke="#3f6fb5" stroke-width="1.30" stroke-linecap="butt"/>
<line x1="2128.62" y1="1555.10" x2="2128.62" y2="1558.60" stroke="#3f6fb5" stroke-width="1.30" stroke-linecap="butt"/>
<line x1="2150.01" y1="1555.10" x2="2150.01" y2="1558.60" stroke="#3f6fb5" stroke-width="1.30" stroke-linecap="butt"/>
<line x1="2171.39" y1="1555.10" x2="2171.39" y2="1561.10" stroke="#3f6fb5" stroke-width="1.30" stroke-linecap="butt"/>
<line x1="2192.78" y1="1555.10" x2="2192.78" y2="1558.60" stroke="#3f6fb5" stroke-width="1.30" stroke-linecap="butt"/>
<line x1="2214.17" y1="1555.10" x2="2214.17" y2="1558.60" stroke="#3f6fb5" stroke-width="1.30" stroke-linecap="butt"/>
<line x1="2235.55" y1="1555.10" x2="2235.55" y2="1561.10" stroke="#3f6fb5" stroke-width="1.30" stroke-linecap="butt"/>
<line x1="2256.94" y1="1555.10" x2="2256.94" y2="1558.60" stroke="#3f6fb5" stroke-width="1.30" stroke-linecap="butt"/>
<line x1="2278.33" y1="1555.10" x2="2278.33" y2="1558.60" stroke="#3f6fb5" stroke-width="1.30" stroke-linecap="butt"/>
<line x1="2299.71" y1="1555.10" x2="2299.71" y2="1561.10" stroke="#3f6fb5" stroke-width="1.30" stroke-linecap="butt"/>
<line x1="2321.10" y1="1555.10" x2="2321.10" y2="1558.60" stroke="#3f6fb5" stroke-width="1.30" stroke-linecap="butt"/>
<line x1="2342.48" y1="1555.10" x2="2342.48" y2="1558.60" stroke="#3f6fb5" stroke-width="1.30" stroke-linecap="butt"/>
<line x1="2363.87" y1="1555.10" x2="2363.87" y2="1561.10" stroke="#3f6fb5" stroke-width="1.30" stroke-linecap="butt"/>
<line x1="2385.26" y1="1555.10" x2="2385.26" y2="1558.60" stroke="#3f6fb5" stroke-width="1.30" stroke-linecap="butt"/>
<line x1="2406.64" y1="1555.10" x2="2406.64" y2="1558.60" stroke="#3f6fb5" stroke-width="1.30" stroke-linecap="butt"/>
<line x1="2428.03" y1="1555.10" x2="2428.03" y2="1561.10" stroke="#3f6fb5" stroke-width="1.30" stroke-linecap="butt"/>
<line x1="2449.42" y1="1555.10" x2="2449.42" y2="1558.60" stroke="#3f6fb5" stroke-width="1.30" stroke-linecap="butt"/>
<line x1="2470.80" y1="1555.10" x2="2470.80" y2="1558.60" stroke="#3f6fb5" stroke-width="1.30" stroke-linecap="butt"/>
<line x1="2492.19" y1="1555.10" x2="2492.19" y2="1561.10" stroke="#3f6fb5" stroke-width="1.30" stroke-linecap="butt"/>
<line x1="2513.58" y1="1555.10" x2="2513.58" y2="1558.60" stroke="#3f6fb5" stroke-width="1.30" stroke-linecap="butt"/>
<line x1="2534.96" y1="1555.10" x2="2534.96" y2="1558.60" stroke="#3f6fb5" stroke-width="1.30" stroke-linecap="butt"/>
<line x1="2556.35" y1="1555.10" x2="2556.35" y2="1561.10" stroke="#3f6fb5" stroke-width="1.30" stroke-linecap="butt"/>
<line x1="2577.74" y1="1555.10" x2="2577.74" y2="1558.60" stroke="#3f6fb5" stroke-width="1.30" stroke-linecap="butt"/>
<line x1="2599.12" y1="1555.10" x2="2599.12" y2="1558.60" stroke="#3f6fb5" stroke-width="1.30" stroke-linecap="butt"/>
<line x1="2620.51" y1="1555.10" x2="2620.51" y2="1561.10" stroke="#3f6fb5" stroke-width="1.30" stroke-linecap="butt"/>
<line x1="2641.89" y1="1555.10" x2="2641.89" y2="1558.60" stroke="#3f6fb5" stroke-width="1.30" stroke-linecap="butt"/>
<line x1="2663.28" y1="1555.10" x2="2663.28" y2="1558.60" stroke="#3f6fb5" stroke-width="1.30" stroke-linecap="butt"/>
<line x1="2684.67" y1="1555.10" x2="2684.67" y2="1561.10" stroke="#3f6fb5" stroke-width="1.30" stroke-linecap="butt"/>
<line x1="2706.05" y1="1555.10" x2="2706.05" y2="1558.60" stroke="#3f6fb5" stroke-width="1.30" stroke-linecap="butt"/>
<line x1="2727.44" y1="1555.10" x2="2727.44" y2="1558.60" stroke="#3f6fb5" stroke-width="1.30" stroke-linecap="butt"/>
<line x1="2748.83" y1="1555.10" x2="2748.83" y2="1561.10" stroke="#3f6fb5" stroke-width="1.30" stroke-linecap="butt"/>
<line x1="2770.21" y1="1555.10" x2="2770.21" y2="1558.60" stroke="#3f6fb5" stroke-width="1.30" stroke-linecap="butt"/>
<line x1="2791.60" y1="1555.10" x2="2791.60" y2="1558.60" stroke="#3f6fb5" stroke-width="1.30" stroke-linecap="butt"/>
<line x1="2791.60" y1="1555.10" x2="2791.60" y2="1558.60" stroke="#3f6fb5" stroke-width="1.30" stroke-linecap="butt"/>
<line x1="1529.80" y1="1555.10" x2="2791.60" y2="1555.10" stroke="#3f6fb5" stroke-width="2.00" stroke-linecap="butt"/>
<text x="1536.30" y="1583.00" font-size="19.60" fill="#000" text-anchor="end" transform="rotate(-45 1536.30 1583.00)" >Jan-26</text>
<text x="1600.46" y="1583.00" font-size="19.60" fill="#000" text-anchor="end" transform="rotate(-45 1600.46 1583.00)" >Apr-26</text>
<text x="1664.62" y="1583.00" font-size="19.60" fill="#000" text-anchor="end" transform="rotate(-45 1664.62 1583.00)" >Jul-26</text>
<text x="1728.78" y="1583.00" font-size="19.60" fill="#000" text-anchor="end" transform="rotate(-45 1728.78 1583.00)" >Oct-26</text>
<text x="1792.94" y="1583.00" font-size="19.60" fill="#000" text-anchor="end" transform="rotate(-45 1792.94 1583.00)" >Jan-27</text>
<text x="1857.10" y="1583.00" font-size="19.60" fill="#000" text-anchor="end" transform="rotate(-45 1857.10 1583.00)" >Apr-27</text>
<text x="1921.26" y="1583.00" font-size="19.60" fill="#000" text-anchor="end" transform="rotate(-45 1921.26 1583.00)" >Jul-27</text>
<text x="1985.42" y="1583.00" font-size="19.60" fill="#000" text-anchor="end" transform="rotate(-45 1985.42 1583.00)" >Oct-27</text>
<text x="2049.57" y="1583.00" font-size="19.60" fill="#000" text-anchor="end" transform="rotate(-45 2049.57 1583.00)" >Jan-28</text>
<text x="2113.73" y="1583.00" font-size="19.60" fill="#000" text-anchor="end" transform="rotate(-45 2113.73 1583.00)" >Apr-28</text>
<text x="2177.89" y="1583.00" font-size="19.60" fill="#000" text-anchor="end" transform="rotate(-45 2177.89 1583.00)" >Jul-28</text>
<text x="2242.05" y="1583.00" font-size="19.60" fill="#000" text-anchor="end" transform="rotate(-45 2242.05 1583.00)" >Oct-28</text>
<text x="2306.21" y="1583.00" font-size="19.60" fill="#000" text-anchor="end" transform="rotate(-45 2306.21 1583.00)" >Jan-29</text>
<text x="2370.37" y="1583.00" font-size="19.60" fill="#000" text-anchor="end" transform="rotate(-45 2370.37 1583.00)" >Apr-29</text>
<text x="2434.53" y="1583.00" font-size="19.60" fill="#000" text-anchor="end" transform="rotate(-45 2434.53 1583.00)" >Jul-29</text>
<text x="2498.69" y="1583.00" font-size="19.60" fill="#000" text-anchor="end" transform="rotate(-45 2498.69 1583.00)" >Oct-29</text>
<text x="2562.85" y="1583.00" font-size="19.60" fill="#000" text-anchor="end" transform="rotate(-45 2562.85 1583.00)" >Jan-30</text>
<text x="2627.01" y="1583.00" font-size="19.60" fill="#000" text-anchor="end" transform="rotate(-45 2627.01 1583.00)" >Apr-30</text>
<text x="2691.17" y="1583.00" font-size="19.60" fill="#000" text-anchor="end" transform="rotate(-45 2691.17 1583.00)" >Jul-30</text>
<text x="2755.33" y="1583.00" font-size="19.60" fill="#000" text-anchor="end" transform="rotate(-45 2755.33 1583.00)" >Oct-30</text>
<clipPath id="cpb"><rect x="47" y="1655" width="2813" height="14.6"/></clipPath>
<g clip-path="url(#cpb)">
<text x="1826.56" y="1691.00" font-size="35.60" fill="#000" font-weight="bold" textLength="558.67" lengthAdjust="spacingAndGlyphs" stroke="#000" stroke-width="0.9">OPERATING CASH FLOW - $'000</text>
<text x="811.73" y="1694.00" font-size="35.60" fill="#000" font-weight="bold" textLength="21.61" lengthAdjust="spacingAndGlyphs" >$'</text>
</g>
<g>
<rect x="38.00" y="35.00" width="20.00" height="24.00" fill="#21a366" rx="2.50"/>
<rect x="38.00" y="35.00" width="10.00" height="8.00" fill="#5ed36b" rx="2.00"/>
<rect x="47.00" y="35.00" width="11.00" height="8.00" fill="#b4ec6f" rx="2.00"/>
<rect x="47.00" y="43.00" width="11.00" height="8.00" fill="#2f9a41"/>
<rect x="38.00" y="43.00" width="9.00" height="8.00" fill="#1f8a3e"/>
<rect x="38.00" y="51.00" width="20.00" height="8.00" fill="#2a8a3a" rx="2.00"/>
<rect x="35.00" y="43.00" width="13.00" height="13.00" fill="#107c41" rx="2.00"/>
<text x="41.60" y="54.00" font-size="12.50" fill="#fff" text-anchor="middle" font-weight="bold" >x</text>
</g>
<circle cx="2489.00" cy="44.30" r="6.60" fill="none" stroke="#ffffff" stroke-width="1.60"/>
<line x1="2484.30" y1="49.20" x2="2476.50" y2="57.50" stroke="#ffffff" stroke-width="1.60" stroke-linecap="round"/>
<defs><radialGradient id="av" cx="50%" cy="45%" r="60%"><stop offset="0" stop-color="#c9a58e"/><stop offset="0.45" stop-color="#b89a8a"/><stop offset="1" stop-color="#9fc3d6"/></radialGradient><clipPath id="avc"><circle cx="2571" cy="47" r="18"/></clipPath></defs>
<circle cx="2571.00" cy="47.00" r="18.00" fill="#b5d2dd"/>
<g clip-path="url(#avc)"><rect x="2553" y="29" width="36" height="13" fill="#cfe0e8"/><rect x="2553" y="42" width="36" height="12" fill="#a8cdd6"/><rect x="2553" y="54" width="36" height="12" fill="#b9c9c4"/><ellipse cx="2571" cy="64" rx="13" ry="8" fill="#d6cbbf"/><ellipse cx="2571" cy="46.5" rx="6.3" ry="8.2" fill="#c59f89"/><ellipse cx="2571" cy="41.5" rx="5.6" ry="3.6" fill="#cfae9c"/><rect x="2568" y="53" width="6" height="5" fill="#b98f7a"/></g>
<circle cx="2571.00" cy="47.00" r="18.00" fill="none" stroke="#2a2a2a" stroke-width="1.00"/>
<path d="M2634 36 L2648 36 L2653 43.5 L2641 57 L2629 43.5 Z M2629 43.5 L2653 43.5 M2634 36 L2637 43.5 L2641 57 L2645 43.5 L2648 36 M2637 43.5 L2641 36 L2645 43.5" fill="none" stroke="#ffffff" stroke-width="1.40" stroke-linejoin="round" stroke-linecap="round" />
<line x1="2703.50" y1="46.00" x2="2718.50" y2="46.00" stroke="#ffffff" stroke-width="1.50" stroke-linecap="butt"/>
<rect x="2775.50" y="42.50" width="11.50" height="11.50" fill="none" stroke="#ffffff" stroke-width="1.50" rx="2.50"/>
<path d="M2778.5 42 Q2778.8 39.2 2782 39.2 L2786.5 39.2 Q2790.3 39.2 2790.3 43 L2790.3 47.5 Q2790.3 50.3 2787.5 50.8" fill="none" stroke="#ffffff" stroke-width="1.50" stroke-linejoin="round" stroke-linecap="round" />
<path d="M2847.3 39.3 L2862.7 54.7 M2862.7 39.3 L2847.3 54.7" fill="none" stroke="#ffffff" stroke-width="1.60" stroke-linejoin="round" stroke-linecap="round" />
<path d="M2629.5 97.5 L2644.5 97.5 L2644.5 108.5 L2635.5 108.5 L2631.5 112.5 L2631.5 108.5 L2629.5 108.5 Z" fill="none" stroke="#ffffff" stroke-width="1.50" stroke-linejoin="round" stroke-linecap="round" />
<path d="M2783 100.5 L2776.5 100.5 L2776.5 113 L2790 113 L2790 108.5" fill="none" stroke="#0a0a0a" stroke-width="1.50" stroke-linejoin="round" stroke-linecap="round" />
<path d="M2780.5 108.5 Q2781.5 101.5 2787.5 101.5 L2787.5 98 L2792.5 103 L2787.5 108 L2787.5 104.8 Q2783.5 104.5 2780.5 108.5 Z" fill="none" stroke="#0a0a0a" stroke-width="1.40" stroke-linejoin="round" stroke-linecap="round" />
<path d="M2858.50 105.00 L2862.30 109.00 L2866.10 105.00" fill="none" stroke="#0a1a10" stroke-width="1.90" stroke-linecap="round" stroke-linejoin="round"/>
<path d="M64 149.4 L57.4 149.4 L57.4 180.5 L73.5 180.5" fill="none" stroke="#e9a53b" stroke-width="4.60" stroke-linejoin="miter" stroke-linecap="butt" />
<path d="M80.5 149.4 L84.6 149.4 L84.6 157.5" fill="none" stroke="#e9a53b" stroke-width="4.60" stroke-linejoin="miter" stroke-linecap="butt" />
<path d="M63.5 151.5 L63.5 147.2 L67.6 147.2 Q68 142 71.7 142 Q75.4 142 75.8 147.2 L80 147.2 L80 151.5 Z" fill="#292929" stroke="#b9b9b9" stroke-width="1.50" stroke-linejoin="round" stroke-linecap="round" />
<rect x="76.20" y="160.10" width="19.00" height="24.80" fill="#303030" stroke="#d4d4d4" stroke-width="1.60"/>
<path d="M67.70 224.70 L71.20 228.50 L74.70 224.70" fill="none" stroke="#fff" stroke-width="1.90" stroke-linecap="round" stroke-linejoin="round"/>
<line x1="119.80" y1="140.80" x2="128.20" y2="158.60" stroke="#d0d0d0" stroke-width="1.50" stroke-linecap="round"/>
<line x1="128.60" y1="140.80" x2="120.20" y2="158.60" stroke="#d0d0d0" stroke-width="1.50" stroke-linecap="round"/>
<circle cx="119.40" cy="161.30" r="2.70" fill="none" stroke="#3c9bdc" stroke-width="1.80"/>
<circle cx="128.40" cy="161.30" r="2.70" fill="none" stroke="#3c9bdc" stroke-width="1.80"/>
<path d="M120.8 199.6 L112.8 199.6 L112.8 180 L120.5 180 L124 183.5" fill="none" stroke="#d0d0d0" stroke-width="1.50" stroke-linejoin="round" stroke-linecap="round" />
<path d="M121.5 185.5 L130 185.5 L135.2 190.7 L135.2 202.3 L121.5 202.3 Z M130 185.5 L130 190.7 L135.2 190.7" fill="#292929" stroke="#d0d0d0" stroke-width="1.50" stroke-linejoin="round" stroke-linecap="round" />
<line x1="126.00" y1="194.40" x2="132.30" y2="194.40" stroke="#d0d0d0" stroke-width="1.40" stroke-linecap="butt"/>
<line x1="126.00" y1="197.60" x2="132.30" y2="197.60" stroke="#d0d0d0" stroke-width="1.40" stroke-linecap="butt"/>
<path d="M212.10 190.10 L215.60 193.90 L219.10 190.10" fill="none" stroke="#fff" stroke-width="1.90" stroke-linecap="round" stroke-linejoin="round"/>
<path d="M134 219.3 L136 221 L129.5 229 L127.5 227.3 Z" fill="none" stroke="#d0d0d0" stroke-width="1.40" stroke-linejoin="round" stroke-linecap="round" />
<path d="M122.5 223.5 L132.5 232 L130 235 L120 226.5 Z" fill="none" stroke="#d0d0d0" stroke-width="1.40" stroke-linejoin="round" stroke-linecap="round" />
<path d="M120 226.5 L113 229.3 L122.5 239.5 L130 235 Z" fill="none" stroke="#f0c06a" stroke-width="1.40" stroke-linejoin="round" stroke-linecap="round" />
<path d="M119 234.5 Q123 233 126.5 235.5 L122.5 239.3 Z" fill="#e9a53b" />
<path d="M265.80 264.80 L265.80 258.10 L272.50 258.10" fill="none" stroke="#ddd" stroke-width="1.50" stroke-linejoin="round" stroke-linecap="round" />
<path d="M269.50 261.80 L276.00 268.30 M270.50 268.50 L276.20 268.50 L276.20 262.80" fill="none" stroke="#ddd" stroke-width="1.50" stroke-linejoin="round" stroke-linecap="round" />
<line x1="282.50" y1="135.00" x2="282.50" y2="269.00" stroke="#505050" stroke-width="1.20" stroke-linecap="butt"/>
<path d="M463.70 162.70 L467.20 166.50 L470.70 162.70" fill="none" stroke="#fff" stroke-width="1.90" stroke-linecap="round" stroke-linejoin="round"/>
<path d="M531.50 162.70 L535.00 166.50 L538.50 162.70" fill="none" stroke="#fff" stroke-width="1.90" stroke-linecap="round" stroke-linejoin="round"/>
<path d="M570 157.6 L573.4 154.3 L576.8 157.6" fill="none" stroke="#3c9bdc" stroke-width="1.70" stroke-linejoin="round" stroke-linecap="round" />
<path d="M609 154 L612.4 157.4 L615.8 154" fill="none" stroke="#3c9bdc" stroke-width="1.70" stroke-linejoin="round" stroke-linecap="round" />
<text x="347" y="217.1" font-size="21" fill="#d0d0d0" font-style="italic" style="font-family:Liberation Serif,serif" textLength="9.5" lengthAdjust="spacingAndGlyphs">I</text>
<line x1="383.00" y1="220.30" x2="397.30" y2="220.30" stroke="#d0d0d0" stroke-width="1.50" stroke-linecap="butt"/>
<path d="M415.80 210.60 L419.30 214.40 L422.80 210.60" fill="none" stroke="#fff" stroke-width="1.90" stroke-linecap="round" stroke-linejoin="round"/>
<line x1="434.40" y1="194.00" x2="434.40" y2="230.00" stroke="#505050" stroke-width="1.20" stroke-linecap="butt"/>
<line x1="444.8" y1="201.0" x2="466.2" y2="201.0" stroke="#d0d0d0" stroke-width="1.5" stroke-dasharray="1.5 1.6"/>
<line x1="444.8" y1="201.0" x2="444.8" y2="220.0" stroke="#d0d0d0" stroke-width="1.5" stroke-dasharray="1.5 1.6"/>
<line x1="466.2" y1="201.0" x2="466.2" y2="220.0" stroke="#d0d0d0" stroke-width="1.5" stroke-dasharray="1.5 1.6"/>
<line x1="455.5" y1="201.0" x2="455.5" y2="220.0" stroke="#d0d0d0" stroke-width="1.5" stroke-dasharray="1.5 1.6"/>
<line x1="444.8" y1="210.8" x2="466.2" y2="210.8" stroke="#d0d0d0" stroke-width="1.5" stroke-dasharray="1.5 1.6"/>
<line x1="444.00" y1="221.40" x2="467.00" y2="221.40" stroke="#d0d0d0" stroke-width="1.80" stroke-linecap="butt"/>
<path d="M480.90 210.60 L484.40 214.40 L487.90 210.60" fill="none" stroke="#fff" stroke-width="1.90" stroke-linecap="round" stroke-linejoin="round"/>
<line x1="499.20" y1="194.00" x2="499.20" y2="230.00" stroke="#505050" stroke-width="1.20" stroke-linecap="butt"/>
<path d="M521.5 202 L528.5 210 L520.5 217 L513 209.2 Z M521.5 202 L521.5 200.5 Q524 199.5 524.5 203" fill="none" stroke="#d0d0d0" stroke-width="1.50" stroke-linejoin="round" stroke-linecap="round" />
<path d="M529.5 207 Q532.5 209 531 213.5 Q528 211 529.5 207 Z" fill="#3c9bdc" stroke="#3c9bdc" stroke-width="1.00" stroke-linejoin="round" stroke-linecap="round" />
<rect x="509.00" y="218.60" width="24.30" height="5.60" fill="#ffed00"/>
<path d="M545.80 210.60 L549.30 214.40 L552.80 210.60" fill="none" stroke="#fff" stroke-width="1.90" stroke-linecap="round" stroke-linejoin="round"/>
<rect x="569.80" y="218.60" width="24.60" height="5.60" fill="#ff1010"/>
<path d="M606.90 210.60 L610.40 214.40 L613.90 210.60" fill="none" stroke="#fff" stroke-width="1.90" stroke-linecap="round" stroke-linejoin="round"/>
<path d="M616.80 264.80 L616.80 258.10 L623.50 258.10" fill="none" stroke="#ddd" stroke-width="1.50" stroke-linejoin="round" stroke-linecap="round" />
<path d="M620.50 261.80 L627.00 268.30 M621.50 268.50 L627.20 268.50 L627.20 262.80" fill="none" stroke="#ddd" stroke-width="1.50" stroke-linejoin="round" stroke-linecap="round" />
<line x1="633.30" y1="135.00" x2="633.30" y2="269.00" stroke="#505050" stroke-width="1.20" stroke-linecap="butt"/>
<line x1="653.20" y1="153.00" x2="675.00" y2="153.00" stroke="#d0d0d0" stroke-width="1.60" stroke-linecap="butt"/>
<line x1="656.30" y1="158.90" x2="671.60" y2="158.90" stroke="#d0d0d0" stroke-width="1.60" stroke-linecap="butt"/>
<line x1="653.20" y1="164.80" x2="675.00" y2="164.80" stroke="#d0d0d0" stroke-width="1.60" stroke-linecap="butt"/>
<line x1="691.80" y1="157.00" x2="713.80" y2="157.00" stroke="#d0d0d0" stroke-width="1.60" stroke-linecap="butt"/>
<line x1="695.00" y1="163.10" x2="710.30" y2="163.10" stroke="#d0d0d0" stroke-width="1.60" stroke-linecap="butt"/>
<line x1="691.80" y1="169.10" x2="713.80" y2="169.10" stroke="#d0d0d0" stroke-width="1.60" stroke-linecap="butt"/>
<line x1="731.20" y1="163.00" x2="752.90" y2="163.00" stroke="#d0d0d0" stroke-width="1.60" stroke-linecap="butt"/>
<line x1="734.40" y1="169.10" x2="749.60" y2="169.10" stroke="#d0d0d0" stroke-width="1.60" stroke-linecap="butt"/>
<line x1="731.20" y1="175.20" x2="752.90" y2="175.20" stroke="#d0d0d0" stroke-width="1.60" stroke-linecap="butt"/>
<line x1="763.60" y1="146.00" x2="763.60" y2="182.00" stroke="#505050" stroke-width="1.20" stroke-linecap="butt"/>
<text x="776" y="170" font-size="14.5" fill="#d0d0d0" transform="rotate(-45 776 170)">ab</text>
<path d="M781.5 174.5 L796.5 158.5 M790 158 L796.8 158 L796.8 165" fill="none" stroke="#3c9bdc" stroke-width="1.70" stroke-linejoin="round" stroke-linecap="round" />
<path d="M806.90 162.70 L810.40 166.50 L813.90 162.70" fill="none" stroke="#fff" stroke-width="1.90" stroke-linecap="round" stroke-linejoin="round"/>
<line x1="851.20" y1="144.50" x2="851.20" y2="238.00" stroke="#505050" stroke-width="1.20" stroke-linecap="butt"/>
<text x="870.50" y="163.00" font-size="14.20" fill="#d0d0d0" >ab</text>
<text x="870.50" y="174.00" font-size="14.20" fill="#d0d0d0" >c</text>
<path d="M883 166 L888.5 166 Q891.5 166.3 891.5 169.2 Q891.5 172.2 888.5 172.3 L880.5 172.3 M884 168.8 L880.3 172.3 L884 175.8" fill="none" stroke="#3c9bdc" stroke-width="1.70" stroke-linejoin="round" stroke-linecap="round" />
<line x1="653.20" y1="201.80" x2="675.00" y2="201.80" stroke="#d0d0d0" stroke-width="1.60" stroke-linecap="butt"/>
<line x1="653.20" y1="207.90" x2="668.80" y2="207.90" stroke="#d0d0d0" stroke-width="1.60" stroke-linecap="butt"/>
<line x1="653.20" y1="214.10" x2="675.00" y2="214.10" stroke="#d0d0d0" stroke-width="1.60" stroke-linecap="butt"/>
<line x1="653.20" y1="220.20" x2="668.80" y2="220.20" stroke="#d0d0d0" stroke-width="1.60" stroke-linecap="butt"/>
<line x1="691.80" y1="201.80" x2="713.80" y2="201.80" stroke="#d0d0d0" stroke-width="1.60" stroke-linecap="butt"/>
<line x1="695.40" y1="207.90" x2="710.30" y2="207.90" stroke="#d0d0d0" stroke-width="1.60" stroke-linecap="butt"/>
<line x1="691.80" y1="214.10" x2="713.80" y2="214.10" stroke="#d0d0d0" stroke-width="1.60" stroke-linecap="butt"/>
<line x1="695.40" y1="220.20" x2="710.30" y2="220.20" stroke="#d0d0d0" stroke-width="1.60" stroke-linecap="butt"/>
<line x1="731.20" y1="201.80" x2="752.90" y2="201.80" stroke="#d0d0d0" stroke-width="1.60" stroke-linecap="butt"/>
<line x1="737.60" y1="207.90" x2="752.90" y2="207.90" stroke="#d0d0d0" stroke-width="1.60" stroke-linecap="butt"/>
<line x1="731.20" y1="214.10" x2="752.90" y2="214.10" stroke="#d0d0d0" stroke-width="1.60" stroke-linecap="butt"/>
<line x1="737.60" y1="220.20" x2="752.90" y2="220.20" stroke="#d0d0d0" stroke-width="1.60" stroke-linecap="butt"/>
<line x1="763.60" y1="194.00" x2="763.60" y2="230.00" stroke="#505050" stroke-width="1.20" stroke-linecap="butt"/>
<line x1="774.20" y1="201.80" x2="796.00" y2="201.80" stroke="#d0d0d0" stroke-width="1.60" stroke-linecap="butt"/>
<line x1="787.70" y1="207.90" x2="796.00" y2="207.90" stroke="#d0d0d0" stroke-width="1.60" stroke-linecap="butt"/>
<line x1="787.70" y1="214.10" x2="796.00" y2="214.10" stroke="#d0d0d0" stroke-width="1.60" stroke-linecap="butt"/>
<line x1="774.20" y1="220.20" x2="796.00" y2="220.20" stroke="#d0d0d0" stroke-width="1.60" stroke-linecap="butt"/>
<path d="M783.6 211.2 L775 211.2 M778.4 207.8 L775 211.2 L778.4 214.6" fill="none" stroke="#3c9bdc" stroke-width="1.70" stroke-linejoin="round" stroke-linecap="round" />
<line x1="813.30" y1="201.80" x2="835.00" y2="201.80" stroke="#d0d0d0" stroke-width="1.60" stroke-linecap="butt"/>
<line x1="826.80" y1="207.90" x2="835.00" y2="207.90" stroke="#d0d0d0" stroke-width="1.60" stroke-linecap="butt"/>
<line x1="826.80" y1="214.10" x2="835.00" y2="214.10" stroke="#d0d0d0" stroke-width="1.60" stroke-linecap="butt"/>
<line x1="813.30" y1="220.20" x2="835.00" y2="220.20" stroke="#d0d0d0" stroke-width="1.60" stroke-linecap="butt"/>
<path d="M813.8 211.2 L822.4 211.2 M819 207.8 L822.4 211.2 L819 214.6" fill="none" stroke="#3c9bdc" stroke-width="1.70" stroke-linejoin="round" stroke-linecap="round" />
<rect x="868.00" y="201.00" width="21.00" height="20.60" fill="none" stroke="#d0d0d0" stroke-width="1.50"/>
<line x1="878.50" y1="201.00" x2="878.50" y2="221.60" stroke="#d0d0d0" stroke-width="1.40" stroke-linecap="butt"/>
<rect x="868.00" y="205.60" width="21.00" height="12.00" fill="#292929" stroke="#3c9bdc" stroke-width="1.70"/>
<path d="M871.5 211.6 L885.5 211.6 M874.5 208.8 L871.5 211.6 L874.5 214.4 M882.5 208.8 L885.5 211.6 L882.5 214.4" fill="none" stroke="#3c9bdc" stroke-width="1.50" stroke-linejoin="round" stroke-linecap="round" />
<path d="M1050.70 210.60 L1054.20 214.40 L1057.70 210.60" fill="none" stroke="#fff" stroke-width="1.90" stroke-linecap="round" stroke-linejoin="round"/>
<path d="M1067.10 264.80 L1067.10 258.10 L1073.80 258.10" fill="none" stroke="#ddd" stroke-width="1.50" stroke-linejoin="round" stroke-linecap="round" />
<path d="M1070.80 261.80 L1077.30 268.30 M1071.80 268.50 L1077.50 268.50 L1077.50 262.80" fill="none" stroke="#ddd" stroke-width="1.50" stroke-linejoin="round" stroke-linecap="round" />
<line x1="1083.80" y1="135.00" x2="1083.80" y2="269.00" stroke="#505050" stroke-width="1.20" stroke-linecap="butt"/>
<path d="M1301.70 162.70 L1305.20 166.50 L1308.70 162.70" fill="none" stroke="#fff" stroke-width="1.90" stroke-linecap="round" stroke-linejoin="round"/>
<path d="M1138.70 210.60 L1142.20 214.40 L1145.70 210.60" fill="none" stroke="#fff" stroke-width="1.90" stroke-linecap="round" stroke-linejoin="round"/>
<path d="M1214.3 203.5 Q1220.5 203.5 1220.5 210.5 Q1220.5 218.5 1210.5 221 Q1215.5 217 1214.8 213.5 Q1209.5 213.5 1209.5 208.5 Q1209.5 203.5 1214.3 203.5 Z" fill="#d0d0d0" />
<line x1="1235.60" y1="194.00" x2="1235.60" y2="230.00" stroke="#505050" stroke-width="1.20" stroke-linecap="butt"/>
<path d="M1257.5 206.6 L1246 206.6 M1250.3 202.4 L1246 206.6 L1250.3 210.8" fill="none" stroke="#3c9bdc" stroke-width="1.70" stroke-linejoin="round" stroke-linecap="round" />
<text x="1256.50" y="210.00" font-size="13.20" fill="#d0d0d0" >.0</text>
<text x="1248.30" y="222.00" font-size="13.20" fill="#d0d0d0" >.00</text>
<text x="1287.80" y="210.00" font-size="13.20" fill="#d0d0d0" >.00</text>
<text x="1296.30" y="222.00" font-size="13.20" fill="#d0d0d0" >.0</text>
<path d="M1284 217.3 L1296.5 217.3 M1292.3 213.1 L1296.5 217.3 L1292.3 221.5" fill="none" stroke="#3c9bdc" stroke-width="1.70" stroke-linejoin="round" stroke-linecap="round" />
<path d="M1308.80 264.80 L1308.80 258.10 L1315.50 258.10" fill="none" stroke="#ddd" stroke-width="1.50" stroke-linejoin="round" stroke-linecap="round" />
<path d="M1312.50 261.80 L1319.00 268.30 M1313.50 268.50 L1319.20 268.50 L1319.20 262.80" fill="none" stroke="#ddd" stroke-width="1.50" stroke-linejoin="round" stroke-linecap="round" />
<line x1="1325.40" y1="135.00" x2="1325.40" y2="269.00" stroke="#505050" stroke-width="1.20" stroke-linecap="butt"/>
<rect x="1348.50" y="146.40" width="40.70" height="31.20" fill="none" stroke="#c6c6c6" stroke-width="1.50"/>
<line x1="1362.00" y1="146.40" x2="1362.00" y2="177.60" stroke="#c6c6c6" stroke-width="1.40" stroke-linecap="butt"/>
<line x1="1375.60" y1="146.40" x2="1375.60" y2="177.60" stroke="#c6c6c6" stroke-width="1.40" stroke-linecap="butt"/>
<line x1="1348.50" y1="156.60" x2="1389.20" y2="156.60" stroke="#c6c6c6" stroke-width="1.40" stroke-linecap="butt"/>
<line x1="1348.50" y1="167.20" x2="1389.20" y2="167.20" stroke="#c6c6c6" stroke-width="1.40" stroke-linecap="butt"/>
<rect x="1363.00" y="156.30" width="30.00" height="11.20" fill="#1a78d2"/>
<line x1="1376.20" y1="157.50" x2="1376.20" y2="166.50" stroke="#6db6f0" stroke-width="1.20" stroke-linecap="butt"/>
<line x1="1389.80" y1="157.50" x2="1389.80" y2="166.50" stroke="#6db6f0" stroke-width="0.00" stroke-linecap="butt"/>
<path d="M1366 161.9 L1346.5 161.9 M1354 154.5 L1346.2 161.9 L1354 169.3" fill="none" stroke="#3f97dd" stroke-width="2.00" stroke-linejoin="round" stroke-linecap="round" />
<path d="M1366 159 L1352 159 M1366 164.8 L1352 164.8" fill="none" stroke="#3f97dd" stroke-width="1.20" stroke-linejoin="round" stroke-linecap="round" />
<path d="M1365.00 224.70 L1368.50 228.50 L1372.00 224.70" fill="none" stroke="#fff" stroke-width="1.90" stroke-linecap="round" stroke-linejoin="round"/>
<rect x="1413.90" y="146.40" width="40.30" height="31.20" fill="none" stroke="#c6c6c6" stroke-width="1.50"/>
<line x1="1427.40" y1="146.40" x2="1427.40" y2="177.60" stroke="#c6c6c6" stroke-width="1.40" stroke-linecap="butt"/>
<line x1="1441.00" y1="146.40" x2="1441.00" y2="177.60" stroke="#c6c6c6" stroke-width="1.40" stroke-linecap="butt"/>
<line x1="1413.90" y1="156.60" x2="1454.20" y2="156.60" stroke="#c6c6c6" stroke-width="1.40" stroke-linecap="butt"/>
<line x1="1413.90" y1="167.20" x2="1454.20" y2="167.20" stroke="#c6c6c6" stroke-width="1.40" stroke-linecap="butt"/>
<path d="M1419.2 156.3 L1437.5 156.3 L1443 161.9 L1437.5 167.5 L1419.2 167.5 Z" fill="#1a78d2" />
<line x1="1433.20" y1="157.50" x2="1433.20" y2="166.50" stroke="#6db6f0" stroke-width="1.20" stroke-linecap="butt"/>
<path d="M1440.5 154.3 L1456.5 171.5 M1456.5 154.3 L1440.5 171.5" fill="none" stroke="#e5534f" stroke-width="1.80" stroke-linejoin="round" stroke-linecap="round" />
<path d="M1429.60 224.70 L1433.10 228.50 L1436.60 224.70" fill="none" stroke="#fff" stroke-width="1.90" stroke-linecap="round" stroke-linejoin="round"/>
<rect x="1479.80" y="146.40" width="40.40" height="31.20" fill="none" stroke="#c6c6c6" stroke-width="1.50"/>
<line x1="1489.80" y1="146.40" x2="1489.80" y2="177.60" stroke="#c6c6c6" stroke-width="1.40" stroke-linecap="butt"/>
<line x1="1510.20" y1="146.40" x2="1510.20" y2="177.60" stroke="#c6c6c6" stroke-width="1.40" stroke-linecap="butt"/>
<line x1="1479.80" y1="156.60" x2="1520.20" y2="156.60" stroke="#c6c6c6" stroke-width="1.40" stroke-linecap="butt"/>
<line x1="1479.80" y1="167.20" x2="1520.20" y2="167.20" stroke="#c6c6c6" stroke-width="1.40" stroke-linecap="butt"/>
<rect x="1489.80" y="156.60" width="20.40" height="10.60" fill="#1a78d2"/>
<path d="M1488.2 140.4 L1511.8 140.4 M1488.2 137.8 L1488.2 143 M1511.8 137.8 L1511.8 143" fill="none" stroke="#3f97dd" stroke-width="1.50" stroke-linejoin="round" stroke-linecap="round" />
<path d="M1495.60 222.90 L1499.10 226.70 L1502.60 222.90" fill="none" stroke="#fff" stroke-width="1.90" stroke-linecap="round" stroke-linejoin="round"/>
<line x1="1544.50" y1="135.00" x2="1544.50" y2="269.00" stroke="#505050" stroke-width="1.20" stroke-linecap="butt"/>
<path d="M1583.5 146.5 L1583.5 142.3 L1567 142.3 L1576.5 151.9 L1567 161.5 L1583.5 161.5 L1583.5 157.3" fill="none" stroke="#d0d0d0" stroke-width="1.60" stroke-linejoin="miter" stroke-linecap="round" />
<path d="M1695.90 150.90 L1699.40 154.70 L1702.90 150.90" fill="none" stroke="#fff" stroke-width="1.90" stroke-linecap="round" stroke-linejoin="round"/>
<rect x="1564.00" y="181.40" width="21.80" height="19.00" fill="none" stroke="#d0d0d0" stroke-width="1.50"/>
<line x1="1564.00" y1="184.20" x2="1585.80" y2="184.20" stroke="#d0d0d0" stroke-width="1.30" stroke-linecap="butt"/>
<path d="M1574.5 187 L1574.5 197.2 M1570 193 L1574.5 197.5 L1579 193" fill="none" stroke="#3c9bdc" stroke-width="1.70" stroke-linejoin="round" stroke-linecap="round" />
<path d="M1620.90 188.90 L1624.40 192.70 L1627.90 188.90" fill="none" stroke="#fff" stroke-width="1.90" stroke-linecap="round" stroke-linejoin="round"/>
<path d="M1577.5 219.6 L1585.2 227.3 L1571.2 240 L1564 232.5 Z" fill="none" stroke="#c065d0" stroke-width="1.60" stroke-linejoin="round" stroke-linecap="round" />
<path d="M1569.5 227.5 L1576.5 235 L1571.2 240 L1564 232.5 Z" fill="#b24fc4" stroke="#c065d0" stroke-width="1.20" stroke-linejoin="round" stroke-linecap="round" />
<path d="M1638.80 227.90 L1642.30 231.70 L1645.80 227.90" fill="none" stroke="#fff" stroke-width="1.90" stroke-linecap="round" stroke-linejoin="round"/>
<path d="M1731 164 L1743 164 L1731 181 L1743.5 181" fill="none" stroke="#d0d0d0" stroke-width="1.60" stroke-linejoin="miter" stroke-linecap="round" />
<path d="M1749 153 L1771.5 153 L1771.5 155 L1763 165 L1763 174.8 L1757.5 174.8 L1757.5 165 L1749 155 Z" fill="none" stroke="#d0d0d0" stroke-width="1.60" stroke-linejoin="round" stroke-linecap="round" />
<path d="M1768.75 223.20 L1772.50 227.20 L1776.25 223.20" fill="none" stroke="#fff" stroke-width="1.90" stroke-linecap="round" stroke-linejoin="round"/>
<circle cx="1826.50" cy="157.00" r="15.20" fill="none" stroke="#d0d0d0" stroke-width="1.70"/>
<line x1="1815.40" y1="168.00" x2="1799.00" y2="184.30" stroke="#d0d0d0" stroke-width="1.70" stroke-linecap="round"/>
<path d="M1842.45 223.20 L1846.20 227.20 L1849.95 223.20" fill="none" stroke="#fff" stroke-width="1.90" stroke-linecap="round" stroke-linejoin="round"/>
<line x1="1868.40" y1="135.00" x2="1868.40" y2="269.00" stroke="#505050" stroke-width="1.20" stroke-linecap="butt"/>
<rect x="1895.70" y="141.70" width="40.60" height="40.60" fill="none" stroke="#c9511f" stroke-width="2.20"/>
<rect x="1900.00" y="146.20" width="14.00" height="13.20" fill="none" stroke="#c9511f" stroke-width="1.70"/>
<rect x="1918.60" y="146.20" width="14.00" height="13.20" fill="none" stroke="#c9511f" stroke-width="1.70"/>
<rect x="1900.00" y="164.60" width="14.00" height="13.20" fill="none" stroke="#c9511f" stroke-width="1.70"/>
<rect x="1918.60" y="164.60" width="14.00" height="13.20" fill="none" stroke="#c9511f" stroke-width="1.70"/>
<line x1="1963.60" y1="135.00" x2="1963.60" y2="269.00" stroke="#505050" stroke-width="1.20" stroke-linecap="butt"/>
<rect x="1989.80" y="142.00" width="40.00" height="40.00" fill="none" stroke="#c6c6c6" stroke-width="1.50"/>
<rect x="1989.80" y="142.00" width="40.00" height="5.00" fill="#8a8a8a"/>
<line x1="1989.80" y1="153.50" x2="2029.80" y2="153.50" stroke="#c6c6c6" stroke-width="1.30" stroke-linecap="butt"/>
<line x1="1989.80" y1="163.00" x2="2029.80" y2="163.00" stroke="#c6c6c6" stroke-width="1.30" stroke-linecap="butt"/>
<line x1="1989.80" y1="172.50" x2="2029.80" y2="172.50" stroke="#c6c6c6" stroke-width="1.30" stroke-linecap="butt"/>
<line x1="2003.00" y1="172.50" x2="2003.00" y2="182.00" stroke="#c6c6c6" stroke-width="1.30" stroke-linecap="butt"/>
<line x1="2016.50" y1="172.50" x2="2016.50" y2="182.00" stroke="#c6c6c6" stroke-width="1.30" stroke-linecap="butt"/>
<circle cx="2008.70" cy="159.20" r="13.30" fill="#292929" stroke="#c6c6c6" stroke-width="1.60"/>
<line x1="2018.30" y1="168.80" x2="2030.50" y2="182.50" stroke="#c6c6c6" stroke-width="1.80" stroke-linecap="butt"/>
<rect x="2002.00" y="157.00" width="4.00" height="8.00" fill="#8f8f8f"/>
<rect x="2006.50" y="152.00" width="4.40" height="13.00" fill="#292929" stroke="#c6c6c6" stroke-width="1.20"/>
<rect x="2011.80" y="155.00" width="3.60" height="10.00" fill="#2b88d8"/>
<line x1="2056.30" y1="135.00" x2="2056.30" y2="269.00" stroke="#505050" stroke-width="1.20" stroke-linecap="butt"/>
<path d="M2850.50 254.00 L2857.50 261.00 L2864.50 254.00" fill="none" stroke="#fff" stroke-width="1.70" stroke-linecap="round" stroke-linejoin="round"/>
<circle cx="2212.50" cy="199.00" r="56.30" fill="#fff"/>
<rect x="2182.00" y="173.00" width="61.20" height="53.00" fill="#5e63ee"/>
<rect x="2190.00" y="182.00" width="19.30" height="14.20" fill="#fff"/>
<rect x="2216.00" y="182.00" width="19.30" height="14.20" fill="#fff"/>
<rect x="2190.00" y="204.00" width="19.30" height="14.20" fill="#fff"/>
<rect x="2216.00" y="204.00" width="19.30" height="14.20" fill="#fff"/>
<text x="2291.90" y="197.00" font-size="49.40" fill="#fff" font-weight="bold" textLength="124.25" lengthAdjust="spacingAndGlyphs" stroke="#fff" stroke-width="1.2">FINM</text>
<text x="2447.26" y="197.00" font-size="49.40" fill="#fff" font-weight="bold" textLength="206.29" lengthAdjust="spacingAndGlyphs" stroke="#fff" stroke-width="1.2">DELSLAB</text>
<circle cx="2430.90" cy="181.20" r="12.30" fill="none" stroke="#fff" stroke-width="8.80"/>
<rect x="2422.60" y="158.00" width="16.60" height="25.80" fill="#292929" rx="5.00"/>
<rect x="2427.30" y="154.80" width="7.30" height="27.00" fill="#fff" rx="3.60"/>
<text x="2295.2" y="237" font-size="34" fill="#fff" stroke="#fff" stroke-width="0.5" textLength="356.5">Templates</text>
</svg>
</body></html>
